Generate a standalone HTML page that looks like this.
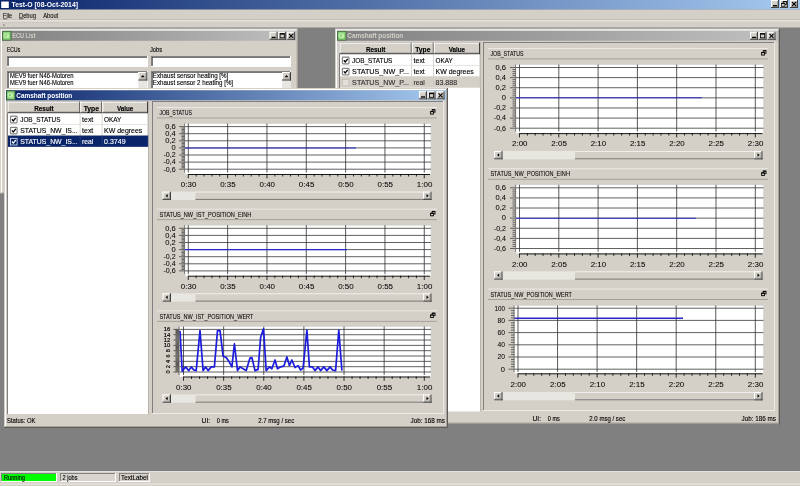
<!DOCTYPE html>
<html><head><meta charset="utf-8"><style>
html,body{margin:0;padding:0;background:#808080;width:800px;height:486px;overflow:hidden}
svg{display:block;will-change:transform}
text{font-family:"Liberation Sans",sans-serif}
</style></head><body>
<svg width="800" height="486" viewBox="0 0 800 486">
<linearGradient id="g1" x1="0" x2="1" y1="0" y2="0"><stop offset="0" stop-color="#0A246A"/><stop offset="1" stop-color="#A6CAF0"/></linearGradient>
<rect x="0.00" y="0.00" width="800.00" height="9.60" fill="url(#g1)" />
<rect x="1.20" y="1.50" width="7.60" height="6.50" fill="#FFFFFF" />
<text x="11.50" y="7.40" font-size="6.4" fill="#FFFFFF" font-weight="bold" text-anchor="start" textLength="66.50" lengthAdjust="spacingAndGlyphs"  >Test-O [08-Oct-2014]</text>
<rect x="771.00" y="0.00" width="8.00" height="8.00" fill="#D4D0C8" />
<rect x="771.00" y="0.00" width="8.00" height="1.00" fill="#FFFFFF" />
<rect x="771.00" y="0.00" width="1.00" height="8.00" fill="#FFFFFF" />
<rect x="771.00" y="7.00" width="8.00" height="1.00" fill="#404040" />
<rect x="778.00" y="0.00" width="1.00" height="8.00" fill="#404040" />
<rect x="772.00" y="6.00" width="6.00" height="1.00" fill="#808080" opacity="0.6"/>
<rect x="777.00" y="1.00" width="1.00" height="6.00" fill="#808080" opacity="0.6"/>
<rect x="773.00" y="5.00" width="4.00" height="1.30" fill="#000" />
<rect x="780.00" y="0.00" width="8.00" height="8.00" fill="#D4D0C8" />
<rect x="780.00" y="0.00" width="8.00" height="1.00" fill="#FFFFFF" />
<rect x="780.00" y="0.00" width="1.00" height="8.00" fill="#FFFFFF" />
<rect x="780.00" y="7.00" width="8.00" height="1.00" fill="#404040" />
<rect x="787.00" y="0.00" width="1.00" height="8.00" fill="#404040" />
<rect x="781.00" y="6.00" width="6.00" height="1.00" fill="#808080" opacity="0.6"/>
<rect x="786.00" y="1.00" width="1.00" height="6.00" fill="#808080" opacity="0.6"/>
<rect x="783.20" y="1.40" width="3.30" height="3.00" fill="none" stroke="#000" stroke-width="0.7"/>
<rect x="783.20" y="1.20" width="3.30" height="0.90" fill="#000" />
<rect x="781.60" y="3.20" width="3.30" height="3.00" fill="#D4D0C8" stroke="#000" stroke-width="0.7"/>
<rect x="781.60" y="3.00" width="3.30" height="0.90" fill="#000" />
<rect x="790.00" y="0.00" width="8.00" height="8.00" fill="#D4D0C8" />
<rect x="790.00" y="0.00" width="8.00" height="1.00" fill="#FFFFFF" />
<rect x="790.00" y="0.00" width="1.00" height="8.00" fill="#FFFFFF" />
<rect x="790.00" y="7.00" width="8.00" height="1.00" fill="#404040" />
<rect x="797.00" y="0.00" width="1.00" height="8.00" fill="#404040" />
<rect x="791.00" y="6.00" width="6.00" height="1.00" fill="#808080" opacity="0.6"/>
<rect x="796.00" y="1.00" width="1.00" height="6.00" fill="#808080" opacity="0.6"/>
<line x1="792.00" y1="2.00" x2="796.00" y2="6.00" stroke="#000" stroke-width="1.1" />
<line x1="796.00" y1="2.00" x2="792.00" y2="6.00" stroke="#000" stroke-width="1.1" />
<rect x="0.00" y="9.60" width="800.00" height="18.00" fill="#D4D0C8" />
<text x="3.00" y="18.30" font-size="6.6" fill="#000" font-weight="normal" text-anchor="start" textLength="9.00" lengthAdjust="spacingAndGlyphs" stroke="#000" stroke-width="0.06" >File</text>
<text x="19.00" y="18.30" font-size="6.6" fill="#000" font-weight="normal" text-anchor="start" textLength="17.00" lengthAdjust="spacingAndGlyphs" stroke="#000" stroke-width="0.06" >Debug</text>
<text x="43.20" y="18.30" font-size="6.6" fill="#000" font-weight="normal" text-anchor="start" textLength="15.00" lengthAdjust="spacingAndGlyphs" stroke="#000" stroke-width="0.06" >About</text>
<rect x="3.00" y="18.60" width="4.20" height="0.70" fill="#000" />
<rect x="19.00" y="18.60" width="4.60" height="0.70" fill="#000" />
<rect x="0.00" y="19.50" width="800.00" height="0.90" fill="#B8B4AC" />
<rect x="0.00" y="20.40" width="800.00" height="0.90" fill="#F4F2EE" />
<rect x="2.00" y="22.30" width="1.00" height="0.80" fill="#C0BCB4" />
<rect x="4.00" y="22.30" width="1.00" height="0.80" fill="#C0BCB4" />
<rect x="6.00" y="22.30" width="1.00" height="0.80" fill="#C0BCB4" />
<rect x="8.00" y="22.30" width="1.00" height="0.80" fill="#C0BCB4" />
<rect x="10.00" y="22.30" width="1.00" height="0.80" fill="#C0BCB4" />
<rect x="12.00" y="22.30" width="1.00" height="0.80" fill="#C0BCB4" />
<rect x="14.00" y="22.30" width="1.00" height="0.80" fill="#C0BCB4" />
<rect x="16.00" y="22.30" width="1.00" height="0.80" fill="#C0BCB4" />
<rect x="18.00" y="22.30" width="1.00" height="0.80" fill="#C0BCB4" />
<rect x="20.00" y="22.30" width="1.00" height="0.80" fill="#C0BCB4" />
<rect x="22.00" y="22.30" width="1.00" height="0.80" fill="#C0BCB4" />
<rect x="24.00" y="22.30" width="1.00" height="0.80" fill="#C0BCB4" />
<rect x="26.00" y="22.30" width="1.00" height="0.80" fill="#C0BCB4" />
<rect x="28.00" y="22.30" width="1.00" height="0.80" fill="#C0BCB4" />
<rect x="30.00" y="22.30" width="1.00" height="0.80" fill="#C0BCB4" />
<rect x="32.00" y="22.30" width="1.00" height="0.80" fill="#C0BCB4" />
<rect x="34.00" y="22.30" width="1.00" height="0.80" fill="#C0BCB4" />
<rect x="36.00" y="22.30" width="1.00" height="0.80" fill="#C0BCB4" />
<rect x="38.00" y="22.30" width="1.00" height="0.80" fill="#C0BCB4" />
<rect x="40.00" y="22.30" width="1.00" height="0.80" fill="#C0BCB4" />
<rect x="42.00" y="22.30" width="1.00" height="0.80" fill="#C0BCB4" />
<rect x="44.00" y="22.30" width="1.00" height="0.80" fill="#C0BCB4" />
<rect x="46.00" y="22.30" width="1.00" height="0.80" fill="#C0BCB4" />
<rect x="48.00" y="22.30" width="1.00" height="0.80" fill="#C0BCB4" />
<rect x="50.00" y="22.30" width="1.00" height="0.80" fill="#C0BCB4" />
<rect x="52.00" y="22.30" width="1.00" height="0.80" fill="#C0BCB4" />
<rect x="54.00" y="22.30" width="1.00" height="0.80" fill="#C0BCB4" />
<rect x="56.00" y="22.30" width="1.00" height="0.80" fill="#C0BCB4" />
<rect x="58.00" y="22.30" width="1.00" height="0.80" fill="#C0BCB4" />
<rect x="3.50" y="24.00" width="0.90" height="2.00" fill="#707070" />
<rect x="0.00" y="27.80" width="800.00" height="443.20" fill="#808080" />
<rect x="0.00" y="471.00" width="800.00" height="15.00" fill="#D4D0C8" />
<rect x="0.00" y="471.00" width="800.00" height="1.00" fill="#E4E2DC" />
<rect x="0.00" y="483.60" width="800.00" height="0.90" fill="#F0EEEA" />
<rect x="1.00" y="473.00" width="56.00" height="9.00" fill="#00FF00" />
<rect x="1.00" y="473.00" width="56.00" height="1.00" fill="#808080" />
<rect x="1.00" y="473.00" width="1.00" height="9.00" fill="#808080" />
<rect x="1.00" y="481.00" width="56.00" height="1.00" fill="#FFFFFF" />
<rect x="56.00" y="473.00" width="1.00" height="9.00" fill="#FFFFFF" />
<text x="4.00" y="479.80" font-size="6.4" fill="#000" font-weight="normal" text-anchor="start" textLength="21.00" lengthAdjust="spacingAndGlyphs" stroke="#000" stroke-width="0.12" >Running</text>
<rect x="60.00" y="473.00" width="56.00" height="9.00" fill="#D8D5CE" />
<rect x="60.00" y="473.00" width="56.00" height="1.00" fill="#808080" />
<rect x="60.00" y="473.00" width="1.00" height="9.00" fill="#808080" />
<rect x="60.00" y="481.00" width="56.00" height="1.00" fill="#FFFFFF" />
<rect x="115.00" y="473.00" width="1.00" height="9.00" fill="#FFFFFF" />
<text x="62.50" y="479.80" font-size="6.4" fill="#000" font-weight="normal" text-anchor="start" textLength="15.00" lengthAdjust="spacingAndGlyphs" stroke="#000" stroke-width="0.12" >2 jobs</text>
<rect x="119.00" y="473.00" width="31.00" height="9.00" fill="#D4D0C8" />
<rect x="119.00" y="473.00" width="31.00" height="1.00" fill="#808080" />
<rect x="119.00" y="473.00" width="1.00" height="9.00" fill="#808080" />
<rect x="119.00" y="481.00" width="31.00" height="1.00" fill="#FFFFFF" />
<rect x="149.00" y="473.00" width="1.00" height="9.00" fill="#FFFFFF" />
<text x="121.00" y="479.80" font-size="6.4" fill="#000" font-weight="normal" text-anchor="start" textLength="27.00" lengthAdjust="spacingAndGlyphs" stroke="#000" stroke-width="0.12" >TextLabel</text>
<rect x="0.00" y="28.50" width="298.60" height="166.00" fill="#D4D0C8" />
<rect x="1.00" y="29.50" width="296.60" height="1.00" fill="#FFFFFF" />
<rect x="1.00" y="29.50" width="1.00" height="164.00" fill="#FFFFFF" />
<rect x="0.00" y="193.50" width="298.60" height="1.00" fill="#5A5A5A" />
<rect x="297.60" y="28.50" width="1.00" height="166.00" fill="#5A5A5A" />
<rect x="1.00" y="192.50" width="296.60" height="1.00" fill="#A8A49C" />
<rect x="296.60" y="29.50" width="1.00" height="164.00" fill="#A8A49C" />
<linearGradient id="g2" x1="0" x2="1" y1="0" y2="0"><stop offset="0" stop-color="#808080"/><stop offset="1" stop-color="#C0C0C0"/></linearGradient>
<rect x="2.00" y="30.80" width="294.60" height="10.00" fill="url(#g2)" />
<rect x="2.30" y="31.00" width="9.00" height="9.50" fill="#3A6A36" />
<rect x="3.10" y="31.80" width="7.40" height="7.90" fill="#8CD27A" />
<circle cx="5.9" cy="35.6" r="1.9" fill="none" stroke="#C8F2B4" stroke-width="1.1"/>
<line x1="6.90" y1="36.60" x2="7.90" y2="38.00" stroke="#C8F2B4" stroke-width="1.0" />
<line x1="8.60" y1="33.60" x2="8.60" y2="38.00" stroke="#C8F2B4" stroke-width="0.9" />
<text x="12.30" y="38.40" font-size="6.6" fill="#D4D0C8" font-weight="bold" text-anchor="start" textLength="23.20" lengthAdjust="spacingAndGlyphs"  >ECU List</text>
<rect x="269.60" y="31.80" width="8.00" height="8.00" fill="#D4D0C8" />
<rect x="269.60" y="31.80" width="8.00" height="1.00" fill="#FFFFFF" />
<rect x="269.60" y="31.80" width="1.00" height="8.00" fill="#FFFFFF" />
<rect x="269.60" y="38.80" width="8.00" height="1.00" fill="#404040" />
<rect x="276.60" y="31.80" width="1.00" height="8.00" fill="#404040" />
<rect x="270.60" y="37.80" width="6.00" height="1.00" fill="#808080" opacity="0.6"/>
<rect x="275.60" y="32.80" width="1.00" height="6.00" fill="#808080" opacity="0.6"/>
<rect x="271.60" y="36.80" width="4.00" height="1.30" fill="#000" />
<rect x="278.10" y="31.80" width="8.00" height="8.00" fill="#D4D0C8" />
<rect x="278.10" y="31.80" width="8.00" height="1.00" fill="#FFFFFF" />
<rect x="278.10" y="31.80" width="1.00" height="8.00" fill="#FFFFFF" />
<rect x="278.10" y="38.80" width="8.00" height="1.00" fill="#404040" />
<rect x="285.10" y="31.80" width="1.00" height="8.00" fill="#404040" />
<rect x="279.10" y="37.80" width="6.00" height="1.00" fill="#808080" opacity="0.6"/>
<rect x="284.10" y="32.80" width="1.00" height="6.00" fill="#808080" opacity="0.6"/>
<rect x="280.10" y="33.60" width="4.20" height="4.20" fill="none" stroke="#000" stroke-width="0.8"/>
<rect x="280.10" y="33.40" width="4.20" height="1.20" fill="#000" />
<rect x="287.10" y="31.80" width="8.00" height="8.00" fill="#D4D0C8" />
<rect x="287.10" y="31.80" width="8.00" height="1.00" fill="#FFFFFF" />
<rect x="287.10" y="31.80" width="1.00" height="8.00" fill="#FFFFFF" />
<rect x="287.10" y="38.80" width="8.00" height="1.00" fill="#404040" />
<rect x="294.10" y="31.80" width="1.00" height="8.00" fill="#404040" />
<rect x="288.10" y="37.80" width="6.00" height="1.00" fill="#808080" opacity="0.6"/>
<rect x="293.10" y="32.80" width="1.00" height="6.00" fill="#808080" opacity="0.6"/>
<line x1="289.10" y1="33.80" x2="293.10" y2="37.80" stroke="#000" stroke-width="1.1" />
<line x1="293.10" y1="33.80" x2="289.10" y2="37.80" stroke="#000" stroke-width="1.1" />
<text x="7.00" y="52.40" font-size="6.5" fill="#000" font-weight="normal" text-anchor="start" textLength="13.20" lengthAdjust="spacingAndGlyphs" stroke="#000" stroke-width="0.12" >ECUs</text>
<text x="150.00" y="52.40" font-size="6.5" fill="#000" font-weight="normal" text-anchor="start" textLength="12.00" lengthAdjust="spacingAndGlyphs" stroke="#000" stroke-width="0.12" >Jobs</text>
<rect x="7.00" y="56.00" width="141.00" height="11.00" fill="#FFFFFF" />
<rect x="7.00" y="56.00" width="141.00" height="1.00" fill="#808080" />
<rect x="7.00" y="56.00" width="1.00" height="11.00" fill="#808080" />
<rect x="8.00" y="57.00" width="139.00" height="1.00" fill="#404040" opacity="0.7"/>
<rect x="8.00" y="57.00" width="1.00" height="9.00" fill="#404040" opacity="0.7"/>
<rect x="7.00" y="66.00" width="141.00" height="1.00" fill="#FFFFFF" />
<rect x="147.00" y="56.00" width="1.00" height="11.00" fill="#FFFFFF" />
<rect x="151.00" y="56.00" width="140.00" height="11.00" fill="#FFFFFF" />
<rect x="151.00" y="56.00" width="140.00" height="1.00" fill="#808080" />
<rect x="151.00" y="56.00" width="1.00" height="11.00" fill="#808080" />
<rect x="152.00" y="57.00" width="138.00" height="1.00" fill="#404040" opacity="0.7"/>
<rect x="152.00" y="57.00" width="1.00" height="9.00" fill="#404040" opacity="0.7"/>
<rect x="151.00" y="66.00" width="140.00" height="1.00" fill="#FFFFFF" />
<rect x="290.00" y="56.00" width="1.00" height="11.00" fill="#FFFFFF" />
<rect x="7.00" y="71.00" width="141.00" height="125.00" fill="#FFFFFF" />
<rect x="7.00" y="71.00" width="141.00" height="1.00" fill="#808080" />
<rect x="7.00" y="71.00" width="1.00" height="125.00" fill="#808080" />
<rect x="8.00" y="72.00" width="139.00" height="1.00" fill="#404040" opacity="0.7"/>
<rect x="8.00" y="72.00" width="1.00" height="123.00" fill="#404040" opacity="0.7"/>
<rect x="7.00" y="195.00" width="141.00" height="1.00" fill="#FFFFFF" />
<rect x="147.00" y="71.00" width="1.00" height="125.00" fill="#FFFFFF" />
<rect x="151.00" y="71.00" width="140.00" height="125.00" fill="#FFFFFF" />
<rect x="151.00" y="71.00" width="140.00" height="1.00" fill="#808080" />
<rect x="151.00" y="71.00" width="1.00" height="125.00" fill="#808080" />
<rect x="152.00" y="72.00" width="138.00" height="1.00" fill="#404040" opacity="0.7"/>
<rect x="152.00" y="72.00" width="1.00" height="123.00" fill="#404040" opacity="0.7"/>
<rect x="151.00" y="195.00" width="140.00" height="1.00" fill="#FFFFFF" />
<rect x="290.00" y="71.00" width="1.00" height="125.00" fill="#FFFFFF" />
<text x="10.00" y="78.30" font-size="6.4" fill="#000" font-weight="normal" text-anchor="start" textLength="63.50" lengthAdjust="spacingAndGlyphs" stroke="#000" stroke-width="0.12" >MEV9 fuer N46-Motoren</text>
<text x="10.00" y="85.40" font-size="6.4" fill="#000" font-weight="normal" text-anchor="start" textLength="63.50" lengthAdjust="spacingAndGlyphs" stroke="#000" stroke-width="0.12" >MEV9 fuer N46-Motoren</text>
<text x="152.80" y="78.30" font-size="6.4" fill="#000" font-weight="normal" text-anchor="start" textLength="75.50" lengthAdjust="spacingAndGlyphs" stroke="#000" stroke-width="0.12" >Exhaust sensor heating [%]</text>
<text x="152.80" y="85.40" font-size="6.4" fill="#000" font-weight="normal" text-anchor="start" textLength="80.30" lengthAdjust="spacingAndGlyphs" stroke="#000" stroke-width="0.12" >Exhaust sensor 2 heating [%]</text>
<rect x="138.30" y="72.00" width="9.00" height="120.00" fill="#E8E6E2" />
<rect x="138.30" y="72.00" width="9.00" height="8.50" fill="#D4D0C8" />
<rect x="138.30" y="72.00" width="9.00" height="1.00" fill="#FFFFFF" />
<rect x="138.30" y="72.00" width="1.00" height="8.50" fill="#FFFFFF" />
<rect x="138.30" y="79.50" width="9.00" height="1.00" fill="#404040" />
<rect x="146.30" y="72.00" width="1.00" height="8.50" fill="#404040" />
<rect x="139.30" y="78.50" width="7.00" height="1.00" fill="#808080" opacity="0.6"/>
<rect x="145.30" y="73.00" width="1.00" height="6.50" fill="#808080" opacity="0.6"/>
<polygon points="140.8,77.3 144.8,77.3 142.8,75.0" fill="#000"/>
<rect x="282.00" y="72.00" width="9.00" height="120.00" fill="#E8E6E2" />
<rect x="282.00" y="72.00" width="9.00" height="8.50" fill="#D4D0C8" />
<rect x="282.00" y="72.00" width="9.00" height="1.00" fill="#FFFFFF" />
<rect x="282.00" y="72.00" width="1.00" height="8.50" fill="#FFFFFF" />
<rect x="282.00" y="79.50" width="9.00" height="1.00" fill="#404040" />
<rect x="290.00" y="72.00" width="1.00" height="8.50" fill="#404040" />
<rect x="283.00" y="78.50" width="7.00" height="1.00" fill="#808080" opacity="0.6"/>
<rect x="289.00" y="73.00" width="1.00" height="6.50" fill="#808080" opacity="0.6"/>
<polygon points="284.5,77.3 288.5,77.3 286.5,75.0" fill="#000"/>
<rect x="335.00" y="28.50" width="445.00" height="396.00" fill="#D4D0C8" />
<rect x="336.00" y="29.50" width="443.00" height="1.00" fill="#FFFFFF" />
<rect x="336.00" y="29.50" width="1.00" height="394.00" fill="#FFFFFF" />
<rect x="335.00" y="423.50" width="445.00" height="1.00" fill="#5A5A5A" />
<rect x="779.00" y="28.50" width="1.00" height="396.00" fill="#5A5A5A" />
<rect x="336.00" y="422.50" width="443.00" height="1.00" fill="#A8A49C" />
<rect x="778.00" y="29.50" width="1.00" height="394.00" fill="#A8A49C" />
<linearGradient id="g3" x1="0" x2="1" y1="0" y2="0"><stop offset="0" stop-color="#808080"/><stop offset="1" stop-color="#C0C0C0"/></linearGradient>
<rect x="337.00" y="30.80" width="441.00" height="10.00" fill="url(#g3)" />
<rect x="337.30" y="31.00" width="9.00" height="9.50" fill="#3A6A36" />
<rect x="338.10" y="31.80" width="7.40" height="7.90" fill="#8CD27A" />
<circle cx="340.90000000000003" cy="35.6" r="1.9" fill="none" stroke="#C8F2B4" stroke-width="1.1"/>
<line x1="341.90" y1="36.60" x2="342.90" y2="38.00" stroke="#C8F2B4" stroke-width="1.0" />
<line x1="343.60" y1="33.60" x2="343.60" y2="38.00" stroke="#C8F2B4" stroke-width="0.9" />
<text x="347.30" y="38.40" font-size="6.6" fill="#D4D0C8" font-weight="bold" text-anchor="start" textLength="56.00" lengthAdjust="spacingAndGlyphs"  >Camshaft position</text>
<rect x="750.00" y="31.80" width="8.00" height="8.00" fill="#D4D0C8" />
<rect x="750.00" y="31.80" width="8.00" height="1.00" fill="#FFFFFF" />
<rect x="750.00" y="31.80" width="1.00" height="8.00" fill="#FFFFFF" />
<rect x="750.00" y="38.80" width="8.00" height="1.00" fill="#404040" />
<rect x="757.00" y="31.80" width="1.00" height="8.00" fill="#404040" />
<rect x="751.00" y="37.80" width="6.00" height="1.00" fill="#808080" opacity="0.6"/>
<rect x="756.00" y="32.80" width="1.00" height="6.00" fill="#808080" opacity="0.6"/>
<rect x="752.00" y="36.80" width="4.00" height="1.30" fill="#000" />
<rect x="758.50" y="31.80" width="8.00" height="8.00" fill="#D4D0C8" />
<rect x="758.50" y="31.80" width="8.00" height="1.00" fill="#FFFFFF" />
<rect x="758.50" y="31.80" width="1.00" height="8.00" fill="#FFFFFF" />
<rect x="758.50" y="38.80" width="8.00" height="1.00" fill="#404040" />
<rect x="765.50" y="31.80" width="1.00" height="8.00" fill="#404040" />
<rect x="759.50" y="37.80" width="6.00" height="1.00" fill="#808080" opacity="0.6"/>
<rect x="764.50" y="32.80" width="1.00" height="6.00" fill="#808080" opacity="0.6"/>
<rect x="760.50" y="33.60" width="4.20" height="4.20" fill="none" stroke="#000" stroke-width="0.8"/>
<rect x="760.50" y="33.40" width="4.20" height="1.20" fill="#000" />
<rect x="767.50" y="31.80" width="8.00" height="8.00" fill="#D4D0C8" />
<rect x="767.50" y="31.80" width="8.00" height="1.00" fill="#FFFFFF" />
<rect x="767.50" y="31.80" width="1.00" height="8.00" fill="#FFFFFF" />
<rect x="767.50" y="38.80" width="8.00" height="1.00" fill="#404040" />
<rect x="774.50" y="31.80" width="1.00" height="8.00" fill="#404040" />
<rect x="768.50" y="37.80" width="6.00" height="1.00" fill="#808080" opacity="0.6"/>
<rect x="773.50" y="32.80" width="1.00" height="6.00" fill="#808080" opacity="0.6"/>
<line x1="769.50" y1="33.80" x2="773.50" y2="37.80" stroke="#000" stroke-width="1.1" />
<line x1="773.50" y1="33.80" x2="769.50" y2="37.80" stroke="#000" stroke-width="1.1" />
<rect x="339.00" y="42.00" width="142.00" height="369.50" fill="#FFFFFF" />
<rect x="339.00" y="42.00" width="142.00" height="1.00" fill="#808080" />
<rect x="339.00" y="42.00" width="1.00" height="369.50" fill="#808080" />
<rect x="480.00" y="42.00" width="1.00" height="369.50" fill="#B8B4AC" />
<rect x="339.50" y="42.60" width="72.30" height="11.60" fill="#D4D0C8" />
<rect x="339.50" y="42.60" width="72.30" height="1.00" fill="#FFFFFF" />
<rect x="339.50" y="42.60" width="1.00" height="11.60" fill="#FFFFFF" />
<rect x="339.50" y="53.20" width="72.30" height="1.00" fill="#404040" />
<rect x="410.80" y="42.60" width="1.00" height="11.60" fill="#404040" />
<rect x="340.50" y="52.20" width="70.30" height="1.00" fill="#808080" opacity="0.4"/>
<text x="375.65" y="51.90" font-size="6.6" fill="#000" font-weight="bold" text-anchor="middle" textLength="19.50" lengthAdjust="spacingAndGlyphs" stroke="#000" stroke-width="0.15" >Result</text>
<rect x="411.80" y="42.60" width="22.00" height="11.60" fill="#D4D0C8" />
<rect x="411.80" y="42.60" width="22.00" height="1.00" fill="#FFFFFF" />
<rect x="411.80" y="42.60" width="1.00" height="11.60" fill="#FFFFFF" />
<rect x="411.80" y="53.20" width="22.00" height="1.00" fill="#404040" />
<rect x="432.80" y="42.60" width="1.00" height="11.60" fill="#404040" />
<rect x="412.80" y="52.20" width="20.00" height="1.00" fill="#808080" opacity="0.4"/>
<text x="422.80" y="51.90" font-size="6.6" fill="#000" font-weight="bold" text-anchor="middle" textLength="15.20" lengthAdjust="spacingAndGlyphs" stroke="#000" stroke-width="0.15" >Type</text>
<rect x="433.80" y="42.60" width="46.20" height="11.60" fill="#D4D0C8" />
<rect x="433.80" y="42.60" width="46.20" height="1.00" fill="#FFFFFF" />
<rect x="433.80" y="42.60" width="1.00" height="11.60" fill="#FFFFFF" />
<rect x="433.80" y="53.20" width="46.20" height="1.00" fill="#404040" />
<rect x="479.00" y="42.60" width="1.00" height="11.60" fill="#404040" />
<rect x="434.80" y="52.20" width="44.20" height="1.00" fill="#808080" opacity="0.4"/>
<text x="456.90" y="51.90" font-size="6.6" fill="#000" font-weight="bold" text-anchor="middle" textLength="16.50" lengthAdjust="spacingAndGlyphs" stroke="#000" stroke-width="0.15" >Value</text>
<rect x="411.20" y="54.40" width="0.80" height="11.10" fill="#D0CCC4" />
<rect x="433.20" y="54.40" width="0.80" height="11.10" fill="#D0CCC4" />
<rect x="479.40" y="54.40" width="0.80" height="11.10" fill="#D0CCC4" />
<rect x="340.00" y="64.90" width="140.00" height="0.80" fill="#E0DDD6" />
<rect x="342.40" y="57.20" width="6.60" height="6.60" fill="#FFFFFF" stroke="#848484" stroke-width="1.2" rx="0.8"/>
<polyline points="343.79999999999995,60.300000000000004 345.2,61.900000000000006 347.7,58.800000000000004" fill="none" stroke="#000" stroke-width="1.3"/>
<text x="352.10" y="63.00" font-size="6.7" fill="#000" font-weight="normal" text-anchor="start" textLength="40.30" lengthAdjust="spacingAndGlyphs" stroke="#000" stroke-width="0.12" >JOB_STATUS</text>
<text x="413.60" y="63.00" font-size="6.7" fill="#000" font-weight="normal" text-anchor="start" textLength="11.20" lengthAdjust="spacingAndGlyphs" stroke="#000" stroke-width="0.12" >text</text>
<text x="435.60" y="63.00" font-size="6.7" fill="#000" font-weight="normal" text-anchor="start" textLength="17.20" lengthAdjust="spacingAndGlyphs" stroke="#000" stroke-width="0.12" >OKAY</text>
<rect x="411.20" y="65.50" width="0.80" height="11.10" fill="#D0CCC4" />
<rect x="433.20" y="65.50" width="0.80" height="11.10" fill="#D0CCC4" />
<rect x="479.40" y="65.50" width="0.80" height="11.10" fill="#D0CCC4" />
<rect x="340.00" y="76.00" width="140.00" height="0.80" fill="#E0DDD6" />
<rect x="342.40" y="68.30" width="6.60" height="6.60" fill="#FFFFFF" stroke="#848484" stroke-width="1.2" rx="0.8"/>
<polyline points="343.79999999999995,71.39999999999999 345.2,73.0 347.7,69.89999999999999" fill="none" stroke="#000" stroke-width="1.3"/>
<text x="352.10" y="74.10" font-size="6.7" fill="#000" font-weight="normal" text-anchor="start" textLength="57.00" lengthAdjust="spacingAndGlyphs" stroke="#000" stroke-width="0.12" >STATUS_NW_P...</text>
<text x="413.60" y="74.10" font-size="6.7" fill="#000" font-weight="normal" text-anchor="start" textLength="11.20" lengthAdjust="spacingAndGlyphs" stroke="#000" stroke-width="0.12" >text</text>
<text x="435.60" y="74.10" font-size="6.7" fill="#000" font-weight="normal" text-anchor="start" textLength="38.20" lengthAdjust="spacingAndGlyphs" stroke="#000" stroke-width="0.12" >KW degrees</text>
<rect x="340.00" y="76.60" width="140.00" height="11.10" fill="#D4D0C8" />
<rect x="411.20" y="76.60" width="0.80" height="11.10" fill="#D0CCC4" />
<rect x="433.20" y="76.60" width="0.80" height="11.10" fill="#D0CCC4" />
<rect x="479.40" y="76.60" width="0.80" height="11.10" fill="#D0CCC4" />
<rect x="340.00" y="87.10" width="140.00" height="0.80" fill="#E0DDD6" />
<rect x="342.40" y="79.40" width="6.60" height="6.60" fill="#E2E0DA" stroke="#C4C0B8" stroke-width="1"/>
<text x="352.10" y="85.20" font-size="6.7" fill="#303030" font-weight="normal" text-anchor="start" textLength="57.00" lengthAdjust="spacingAndGlyphs" stroke="#303030" stroke-width="0.12" >STATUS_NW_P...</text>
<text x="413.60" y="85.20" font-size="6.7" fill="#303030" font-weight="normal" text-anchor="start" textLength="11.20" lengthAdjust="spacingAndGlyphs" stroke="#303030" stroke-width="0.12" >real</text>
<text x="435.60" y="85.20" font-size="6.7" fill="#303030" font-weight="normal" text-anchor="start" textLength="21.50" lengthAdjust="spacingAndGlyphs" stroke="#303030" stroke-width="0.12" >83.888</text>
<rect x="483.00" y="42.00" width="292.00" height="369.00" fill="#D4D0C8" />
<rect x="483.00" y="42.00" width="292.00" height="1.00" fill="#808080" />
<rect x="483.00" y="42.00" width="1.00" height="369.00" fill="#808080" />
<rect x="774.00" y="42.00" width="1.00" height="369.00" fill="#ECEAE4" />
<rect x="483.00" y="410.00" width="292.00" height="1.00" fill="#ECEAE4" />
<text x="532.50" y="420.80" font-size="6.3" fill="#000" font-weight="normal" text-anchor="start" textLength="8.50" lengthAdjust="spacingAndGlyphs" stroke="#000" stroke-width="0.12" >UI:</text>
<text x="547.80" y="420.80" font-size="6.3" fill="#000" font-weight="normal" text-anchor="start" textLength="12.00" lengthAdjust="spacingAndGlyphs" stroke="#000" stroke-width="0.12" >0 ms</text>
<text x="589.30" y="420.80" font-size="6.3" fill="#000" font-weight="normal" text-anchor="start" textLength="36.00" lengthAdjust="spacingAndGlyphs" stroke="#000" stroke-width="0.12" >2.0 msg / sec</text>
<text x="776.00" y="420.80" font-size="6.3" fill="#000" font-weight="normal" text-anchor="end" textLength="34.50" lengthAdjust="spacingAndGlyphs" stroke="#000" stroke-width="0.12" >Job:  186 ms</text>
<rect x="488.00" y="48.00" width="280.00" height="0.90" fill="#EEECE8" />
<rect x="488.00" y="58.50" width="280.00" height="0.90" fill="#A09C94" />
<text x="490.40" y="56.10" font-size="6.4" fill="#000" font-weight="normal" text-anchor="start" textLength="33.20" lengthAdjust="spacingAndGlyphs" stroke="#000" stroke-width="0.05" >JOB_STATUS</text>
<rect x="763.20" y="50.70" width="2.80" height="2.50" fill="none" stroke="#000" stroke-width="0.9"/>
<rect x="763.20" y="50.40" width="2.80" height="0.90" fill="#000" />
<rect x="761.60" y="52.50" width="2.80" height="2.60" fill="#D4D0C8" stroke="#000" stroke-width="0.9"/>
<rect x="761.60" y="52.20" width="2.80" height="0.90" fill="#000" />
<rect x="516.00" y="64.50" width="247.50" height="69.10" fill="#FFFFFF" stroke="#D0D0D0" stroke-width="0.6"/>
<line x1="516.00" y1="67.50" x2="763.50" y2="67.50" stroke="#383838" stroke-width="0.8" />
<line x1="516.00" y1="77.62" x2="763.50" y2="77.62" stroke="#383838" stroke-width="0.8" />
<line x1="516.00" y1="87.73" x2="763.50" y2="87.73" stroke="#383838" stroke-width="0.8" />
<line x1="516.00" y1="97.85" x2="763.50" y2="97.85" stroke="#383838" stroke-width="0.8" />
<line x1="516.00" y1="107.97" x2="763.50" y2="107.97" stroke="#383838" stroke-width="0.8" />
<line x1="516.00" y1="118.08" x2="763.50" y2="118.08" stroke="#383838" stroke-width="0.8" />
<line x1="516.00" y1="128.20" x2="763.50" y2="128.20" stroke="#383838" stroke-width="0.8" />
<line x1="519.50" y1="64.50" x2="519.50" y2="131.50" stroke="#303030" stroke-width="0.8" />
<line x1="558.80" y1="64.50" x2="558.80" y2="131.50" stroke="#303030" stroke-width="0.8" />
<line x1="598.10" y1="64.50" x2="598.10" y2="131.50" stroke="#303030" stroke-width="0.8" />
<line x1="637.40" y1="64.50" x2="637.40" y2="131.50" stroke="#303030" stroke-width="0.8" />
<line x1="676.70" y1="64.50" x2="676.70" y2="131.50" stroke="#303030" stroke-width="0.8" />
<line x1="716.00" y1="64.50" x2="716.00" y2="131.50" stroke="#303030" stroke-width="0.8" />
<line x1="755.30" y1="64.50" x2="755.30" y2="131.50" stroke="#303030" stroke-width="0.8" />
<text x="506.00" y="69.80" font-size="6.5" fill="#000" font-weight="normal" text-anchor="end" textLength="10.50" lengthAdjust="spacingAndGlyphs" stroke="#000" stroke-width="0.04" >0,6</text>
<text x="506.00" y="79.92" font-size="6.5" fill="#000" font-weight="normal" text-anchor="end" textLength="10.50" lengthAdjust="spacingAndGlyphs" stroke="#000" stroke-width="0.04" >0,4</text>
<text x="506.00" y="90.03" font-size="6.5" fill="#000" font-weight="normal" text-anchor="end" textLength="10.50" lengthAdjust="spacingAndGlyphs" stroke="#000" stroke-width="0.04" >0,2</text>
<text x="506.00" y="100.15" font-size="6.5" fill="#000" font-weight="normal" text-anchor="end" textLength="4.20" lengthAdjust="spacingAndGlyphs" stroke="#000" stroke-width="0.04" >0</text>
<text x="506.00" y="110.27" font-size="6.5" fill="#000" font-weight="normal" text-anchor="end" textLength="12.20" lengthAdjust="spacingAndGlyphs" stroke="#000" stroke-width="0.04" >-0,2</text>
<text x="506.00" y="120.38" font-size="6.5" fill="#000" font-weight="normal" text-anchor="end" textLength="12.20" lengthAdjust="spacingAndGlyphs" stroke="#000" stroke-width="0.04" >-0,4</text>
<text x="506.00" y="130.50" font-size="6.5" fill="#000" font-weight="normal" text-anchor="end" textLength="12.20" lengthAdjust="spacingAndGlyphs" stroke="#000" stroke-width="0.04" >-0,6</text>
<line x1="510.00" y1="67.50" x2="516.00" y2="67.50" stroke="#303030" stroke-width="0.7" />
<line x1="512.50" y1="69.52" x2="516.00" y2="69.52" stroke="#303030" stroke-width="0.7" />
<line x1="512.50" y1="71.55" x2="516.00" y2="71.55" stroke="#303030" stroke-width="0.7" />
<line x1="512.50" y1="73.57" x2="516.00" y2="73.57" stroke="#303030" stroke-width="0.7" />
<line x1="512.50" y1="75.59" x2="516.00" y2="75.59" stroke="#303030" stroke-width="0.7" />
<line x1="510.00" y1="77.62" x2="516.00" y2="77.62" stroke="#303030" stroke-width="0.7" />
<line x1="512.50" y1="79.64" x2="516.00" y2="79.64" stroke="#303030" stroke-width="0.7" />
<line x1="512.50" y1="81.66" x2="516.00" y2="81.66" stroke="#303030" stroke-width="0.7" />
<line x1="512.50" y1="83.69" x2="516.00" y2="83.69" stroke="#303030" stroke-width="0.7" />
<line x1="512.50" y1="85.71" x2="516.00" y2="85.71" stroke="#303030" stroke-width="0.7" />
<line x1="510.00" y1="87.73" x2="516.00" y2="87.73" stroke="#303030" stroke-width="0.7" />
<line x1="512.50" y1="89.76" x2="516.00" y2="89.76" stroke="#303030" stroke-width="0.7" />
<line x1="512.50" y1="91.78" x2="516.00" y2="91.78" stroke="#303030" stroke-width="0.7" />
<line x1="512.50" y1="93.80" x2="516.00" y2="93.80" stroke="#303030" stroke-width="0.7" />
<line x1="512.50" y1="95.83" x2="516.00" y2="95.83" stroke="#303030" stroke-width="0.7" />
<line x1="510.00" y1="97.85" x2="516.00" y2="97.85" stroke="#303030" stroke-width="0.7" />
<line x1="512.50" y1="99.87" x2="516.00" y2="99.87" stroke="#303030" stroke-width="0.7" />
<line x1="512.50" y1="101.90" x2="516.00" y2="101.90" stroke="#303030" stroke-width="0.7" />
<line x1="512.50" y1="103.92" x2="516.00" y2="103.92" stroke="#303030" stroke-width="0.7" />
<line x1="512.50" y1="105.94" x2="516.00" y2="105.94" stroke="#303030" stroke-width="0.7" />
<line x1="510.00" y1="107.97" x2="516.00" y2="107.97" stroke="#303030" stroke-width="0.7" />
<line x1="512.50" y1="109.99" x2="516.00" y2="109.99" stroke="#303030" stroke-width="0.7" />
<line x1="512.50" y1="112.01" x2="516.00" y2="112.01" stroke="#303030" stroke-width="0.7" />
<line x1="512.50" y1="114.04" x2="516.00" y2="114.04" stroke="#303030" stroke-width="0.7" />
<line x1="512.50" y1="116.06" x2="516.00" y2="116.06" stroke="#303030" stroke-width="0.7" />
<line x1="510.00" y1="118.08" x2="516.00" y2="118.08" stroke="#303030" stroke-width="0.7" />
<line x1="512.50" y1="120.11" x2="516.00" y2="120.11" stroke="#303030" stroke-width="0.7" />
<line x1="512.50" y1="122.13" x2="516.00" y2="122.13" stroke="#303030" stroke-width="0.7" />
<line x1="512.50" y1="124.15" x2="516.00" y2="124.15" stroke="#303030" stroke-width="0.7" />
<line x1="512.50" y1="126.18" x2="516.00" y2="126.18" stroke="#303030" stroke-width="0.7" />
<line x1="510.00" y1="128.20" x2="516.00" y2="128.20" stroke="#303030" stroke-width="0.7" />
<line x1="515.50" y1="64.50" x2="515.50" y2="131.50" stroke="#707070" stroke-width="0.8" />
<line x1="519.50" y1="133.60" x2="762.50" y2="133.60" stroke="#000" stroke-width="0.9" />
<line x1="519.50" y1="133.10" x2="519.50" y2="137.40" stroke="#000" stroke-width="0.8" />
<line x1="527.36" y1="133.10" x2="527.36" y2="135.60" stroke="#000" stroke-width="0.8" />
<line x1="535.22" y1="133.10" x2="535.22" y2="135.60" stroke="#000" stroke-width="0.8" />
<line x1="543.08" y1="133.10" x2="543.08" y2="135.60" stroke="#000" stroke-width="0.8" />
<line x1="550.94" y1="133.10" x2="550.94" y2="135.60" stroke="#000" stroke-width="0.8" />
<line x1="558.80" y1="133.10" x2="558.80" y2="137.40" stroke="#000" stroke-width="0.8" />
<line x1="566.66" y1="133.10" x2="566.66" y2="135.60" stroke="#000" stroke-width="0.8" />
<line x1="574.52" y1="133.10" x2="574.52" y2="135.60" stroke="#000" stroke-width="0.8" />
<line x1="582.38" y1="133.10" x2="582.38" y2="135.60" stroke="#000" stroke-width="0.8" />
<line x1="590.24" y1="133.10" x2="590.24" y2="135.60" stroke="#000" stroke-width="0.8" />
<line x1="598.10" y1="133.10" x2="598.10" y2="137.40" stroke="#000" stroke-width="0.8" />
<line x1="605.96" y1="133.10" x2="605.96" y2="135.60" stroke="#000" stroke-width="0.8" />
<line x1="613.82" y1="133.10" x2="613.82" y2="135.60" stroke="#000" stroke-width="0.8" />
<line x1="621.68" y1="133.10" x2="621.68" y2="135.60" stroke="#000" stroke-width="0.8" />
<line x1="629.54" y1="133.10" x2="629.54" y2="135.60" stroke="#000" stroke-width="0.8" />
<line x1="637.40" y1="133.10" x2="637.40" y2="137.40" stroke="#000" stroke-width="0.8" />
<line x1="645.26" y1="133.10" x2="645.26" y2="135.60" stroke="#000" stroke-width="0.8" />
<line x1="653.12" y1="133.10" x2="653.12" y2="135.60" stroke="#000" stroke-width="0.8" />
<line x1="660.98" y1="133.10" x2="660.98" y2="135.60" stroke="#000" stroke-width="0.8" />
<line x1="668.84" y1="133.10" x2="668.84" y2="135.60" stroke="#000" stroke-width="0.8" />
<line x1="676.70" y1="133.10" x2="676.70" y2="137.40" stroke="#000" stroke-width="0.8" />
<line x1="684.56" y1="133.10" x2="684.56" y2="135.60" stroke="#000" stroke-width="0.8" />
<line x1="692.42" y1="133.10" x2="692.42" y2="135.60" stroke="#000" stroke-width="0.8" />
<line x1="700.28" y1="133.10" x2="700.28" y2="135.60" stroke="#000" stroke-width="0.8" />
<line x1="708.14" y1="133.10" x2="708.14" y2="135.60" stroke="#000" stroke-width="0.8" />
<line x1="716.00" y1="133.10" x2="716.00" y2="137.40" stroke="#000" stroke-width="0.8" />
<line x1="723.86" y1="133.10" x2="723.86" y2="135.60" stroke="#000" stroke-width="0.8" />
<line x1="731.72" y1="133.10" x2="731.72" y2="135.60" stroke="#000" stroke-width="0.8" />
<line x1="739.58" y1="133.10" x2="739.58" y2="135.60" stroke="#000" stroke-width="0.8" />
<line x1="747.44" y1="133.10" x2="747.44" y2="135.60" stroke="#000" stroke-width="0.8" />
<line x1="755.30" y1="133.10" x2="755.30" y2="137.40" stroke="#000" stroke-width="0.8" />
<text x="519.80" y="146.30" font-size="6.4" fill="#000" font-weight="normal" text-anchor="middle" textLength="15.50" lengthAdjust="spacingAndGlyphs" stroke="#000" stroke-width="0.04" >2:00</text>
<text x="559.10" y="146.30" font-size="6.4" fill="#000" font-weight="normal" text-anchor="middle" textLength="15.50" lengthAdjust="spacingAndGlyphs" stroke="#000" stroke-width="0.04" >2:05</text>
<text x="598.40" y="146.30" font-size="6.4" fill="#000" font-weight="normal" text-anchor="middle" textLength="15.50" lengthAdjust="spacingAndGlyphs" stroke="#000" stroke-width="0.04" >2:10</text>
<text x="637.70" y="146.30" font-size="6.4" fill="#000" font-weight="normal" text-anchor="middle" textLength="15.50" lengthAdjust="spacingAndGlyphs" stroke="#000" stroke-width="0.04" >2:15</text>
<text x="677.00" y="146.30" font-size="6.4" fill="#000" font-weight="normal" text-anchor="middle" textLength="15.50" lengthAdjust="spacingAndGlyphs" stroke="#000" stroke-width="0.04" >2:20</text>
<text x="716.30" y="146.30" font-size="6.4" fill="#000" font-weight="normal" text-anchor="middle" textLength="15.50" lengthAdjust="spacingAndGlyphs" stroke="#000" stroke-width="0.04" >2:25</text>
<text x="755.60" y="146.30" font-size="6.4" fill="#000" font-weight="normal" text-anchor="middle" textLength="15.50" lengthAdjust="spacingAndGlyphs" stroke="#000" stroke-width="0.04" >2:30</text>
<polyline points="516.0,97.8 702.0,97.8" fill="none" stroke="#2828C8" stroke-width="1.05" stroke-linejoin="round"/>
<rect x="494.00" y="151.00" width="268.50" height="8.30" fill="#E8E6E1" />
<rect x="575.00" y="151.00" width="187.50" height="8.30" fill="#D4D0C8" />
<rect x="575.00" y="158.30" width="187.50" height="1.00" fill="#606060" opacity="0.8"/>
<rect x="575.00" y="151.00" width="187.50" height="1.00" fill="#F0EEEA" />
<rect x="494.00" y="151.00" width="8.50" height="8.30" fill="#D4D0C8" />
<rect x="494.00" y="151.00" width="8.50" height="1.00" fill="#FFFFFF" />
<rect x="494.00" y="151.00" width="1.00" height="8.30" fill="#FFFFFF" />
<rect x="494.00" y="158.30" width="8.50" height="1.00" fill="#404040" />
<rect x="501.50" y="151.00" width="1.00" height="8.30" fill="#404040" />
<rect x="495.00" y="157.30" width="6.50" height="1.00" fill="#808080" opacity="0.6"/>
<rect x="500.50" y="152.00" width="1.00" height="6.30" fill="#808080" opacity="0.6"/>
<polygon points="499.2,153.3 499.2,156.8 497,155.05" fill="#000"/>
<rect x="754.00" y="151.00" width="8.50" height="8.30" fill="#D4D0C8" />
<rect x="754.00" y="151.00" width="8.50" height="1.00" fill="#FFFFFF" />
<rect x="754.00" y="151.00" width="1.00" height="8.30" fill="#FFFFFF" />
<rect x="754.00" y="158.30" width="8.50" height="1.00" fill="#404040" />
<rect x="761.50" y="151.00" width="1.00" height="8.30" fill="#404040" />
<rect x="755.00" y="157.30" width="6.50" height="1.00" fill="#808080" opacity="0.6"/>
<rect x="760.50" y="152.00" width="1.00" height="6.30" fill="#808080" opacity="0.6"/>
<polygon points="757.5,153.3 757.5,156.8 759.7,155.05" fill="#000"/>
<rect x="488.00" y="168.30" width="280.00" height="0.90" fill="#EEECE8" />
<rect x="488.00" y="178.80" width="280.00" height="0.90" fill="#A09C94" />
<text x="490.40" y="176.40" font-size="6.4" fill="#000" font-weight="normal" text-anchor="start" textLength="79.50" lengthAdjust="spacingAndGlyphs" stroke="#000" stroke-width="0.05" >STATUS_NW_POSITION_EINH</text>
<rect x="763.20" y="171.00" width="2.80" height="2.50" fill="none" stroke="#000" stroke-width="0.9"/>
<rect x="763.20" y="170.70" width="2.80" height="0.90" fill="#000" />
<rect x="761.60" y="172.80" width="2.80" height="2.60" fill="#D4D0C8" stroke="#000" stroke-width="0.9"/>
<rect x="761.60" y="172.50" width="2.80" height="0.90" fill="#000" />
<rect x="516.00" y="184.80" width="247.50" height="69.10" fill="#FFFFFF" stroke="#D0D0D0" stroke-width="0.6"/>
<line x1="516.00" y1="187.80" x2="763.50" y2="187.80" stroke="#383838" stroke-width="0.8" />
<line x1="516.00" y1="197.92" x2="763.50" y2="197.92" stroke="#383838" stroke-width="0.8" />
<line x1="516.00" y1="208.03" x2="763.50" y2="208.03" stroke="#383838" stroke-width="0.8" />
<line x1="516.00" y1="218.15" x2="763.50" y2="218.15" stroke="#383838" stroke-width="0.8" />
<line x1="516.00" y1="228.27" x2="763.50" y2="228.27" stroke="#383838" stroke-width="0.8" />
<line x1="516.00" y1="238.38" x2="763.50" y2="238.38" stroke="#383838" stroke-width="0.8" />
<line x1="516.00" y1="248.50" x2="763.50" y2="248.50" stroke="#383838" stroke-width="0.8" />
<line x1="519.50" y1="184.80" x2="519.50" y2="251.80" stroke="#303030" stroke-width="0.8" />
<line x1="558.80" y1="184.80" x2="558.80" y2="251.80" stroke="#303030" stroke-width="0.8" />
<line x1="598.10" y1="184.80" x2="598.10" y2="251.80" stroke="#303030" stroke-width="0.8" />
<line x1="637.40" y1="184.80" x2="637.40" y2="251.80" stroke="#303030" stroke-width="0.8" />
<line x1="676.70" y1="184.80" x2="676.70" y2="251.80" stroke="#303030" stroke-width="0.8" />
<line x1="716.00" y1="184.80" x2="716.00" y2="251.80" stroke="#303030" stroke-width="0.8" />
<line x1="755.30" y1="184.80" x2="755.30" y2="251.80" stroke="#303030" stroke-width="0.8" />
<text x="506.00" y="190.10" font-size="6.5" fill="#000" font-weight="normal" text-anchor="end" textLength="10.50" lengthAdjust="spacingAndGlyphs" stroke="#000" stroke-width="0.04" >0,6</text>
<text x="506.00" y="200.22" font-size="6.5" fill="#000" font-weight="normal" text-anchor="end" textLength="10.50" lengthAdjust="spacingAndGlyphs" stroke="#000" stroke-width="0.04" >0,4</text>
<text x="506.00" y="210.33" font-size="6.5" fill="#000" font-weight="normal" text-anchor="end" textLength="10.50" lengthAdjust="spacingAndGlyphs" stroke="#000" stroke-width="0.04" >0,2</text>
<text x="506.00" y="220.45" font-size="6.5" fill="#000" font-weight="normal" text-anchor="end" textLength="4.20" lengthAdjust="spacingAndGlyphs" stroke="#000" stroke-width="0.04" >0</text>
<text x="506.00" y="230.57" font-size="6.5" fill="#000" font-weight="normal" text-anchor="end" textLength="12.20" lengthAdjust="spacingAndGlyphs" stroke="#000" stroke-width="0.04" >-0,2</text>
<text x="506.00" y="240.68" font-size="6.5" fill="#000" font-weight="normal" text-anchor="end" textLength="12.20" lengthAdjust="spacingAndGlyphs" stroke="#000" stroke-width="0.04" >-0,4</text>
<text x="506.00" y="250.80" font-size="6.5" fill="#000" font-weight="normal" text-anchor="end" textLength="12.20" lengthAdjust="spacingAndGlyphs" stroke="#000" stroke-width="0.04" >-0,6</text>
<line x1="510.00" y1="187.80" x2="516.00" y2="187.80" stroke="#303030" stroke-width="0.7" />
<line x1="512.50" y1="189.82" x2="516.00" y2="189.82" stroke="#303030" stroke-width="0.7" />
<line x1="512.50" y1="191.85" x2="516.00" y2="191.85" stroke="#303030" stroke-width="0.7" />
<line x1="512.50" y1="193.87" x2="516.00" y2="193.87" stroke="#303030" stroke-width="0.7" />
<line x1="512.50" y1="195.89" x2="516.00" y2="195.89" stroke="#303030" stroke-width="0.7" />
<line x1="510.00" y1="197.92" x2="516.00" y2="197.92" stroke="#303030" stroke-width="0.7" />
<line x1="512.50" y1="199.94" x2="516.00" y2="199.94" stroke="#303030" stroke-width="0.7" />
<line x1="512.50" y1="201.96" x2="516.00" y2="201.96" stroke="#303030" stroke-width="0.7" />
<line x1="512.50" y1="203.99" x2="516.00" y2="203.99" stroke="#303030" stroke-width="0.7" />
<line x1="512.50" y1="206.01" x2="516.00" y2="206.01" stroke="#303030" stroke-width="0.7" />
<line x1="510.00" y1="208.03" x2="516.00" y2="208.03" stroke="#303030" stroke-width="0.7" />
<line x1="512.50" y1="210.06" x2="516.00" y2="210.06" stroke="#303030" stroke-width="0.7" />
<line x1="512.50" y1="212.08" x2="516.00" y2="212.08" stroke="#303030" stroke-width="0.7" />
<line x1="512.50" y1="214.10" x2="516.00" y2="214.10" stroke="#303030" stroke-width="0.7" />
<line x1="512.50" y1="216.13" x2="516.00" y2="216.13" stroke="#303030" stroke-width="0.7" />
<line x1="510.00" y1="218.15" x2="516.00" y2="218.15" stroke="#303030" stroke-width="0.7" />
<line x1="512.50" y1="220.17" x2="516.00" y2="220.17" stroke="#303030" stroke-width="0.7" />
<line x1="512.50" y1="222.20" x2="516.00" y2="222.20" stroke="#303030" stroke-width="0.7" />
<line x1="512.50" y1="224.22" x2="516.00" y2="224.22" stroke="#303030" stroke-width="0.7" />
<line x1="512.50" y1="226.24" x2="516.00" y2="226.24" stroke="#303030" stroke-width="0.7" />
<line x1="510.00" y1="228.27" x2="516.00" y2="228.27" stroke="#303030" stroke-width="0.7" />
<line x1="512.50" y1="230.29" x2="516.00" y2="230.29" stroke="#303030" stroke-width="0.7" />
<line x1="512.50" y1="232.31" x2="516.00" y2="232.31" stroke="#303030" stroke-width="0.7" />
<line x1="512.50" y1="234.34" x2="516.00" y2="234.34" stroke="#303030" stroke-width="0.7" />
<line x1="512.50" y1="236.36" x2="516.00" y2="236.36" stroke="#303030" stroke-width="0.7" />
<line x1="510.00" y1="238.38" x2="516.00" y2="238.38" stroke="#303030" stroke-width="0.7" />
<line x1="512.50" y1="240.41" x2="516.00" y2="240.41" stroke="#303030" stroke-width="0.7" />
<line x1="512.50" y1="242.43" x2="516.00" y2="242.43" stroke="#303030" stroke-width="0.7" />
<line x1="512.50" y1="244.45" x2="516.00" y2="244.45" stroke="#303030" stroke-width="0.7" />
<line x1="512.50" y1="246.48" x2="516.00" y2="246.48" stroke="#303030" stroke-width="0.7" />
<line x1="510.00" y1="248.50" x2="516.00" y2="248.50" stroke="#303030" stroke-width="0.7" />
<line x1="515.50" y1="184.80" x2="515.50" y2="251.80" stroke="#707070" stroke-width="0.8" />
<line x1="519.50" y1="253.90" x2="762.50" y2="253.90" stroke="#000" stroke-width="0.9" />
<line x1="519.50" y1="253.40" x2="519.50" y2="257.70" stroke="#000" stroke-width="0.8" />
<line x1="527.36" y1="253.40" x2="527.36" y2="255.90" stroke="#000" stroke-width="0.8" />
<line x1="535.22" y1="253.40" x2="535.22" y2="255.90" stroke="#000" stroke-width="0.8" />
<line x1="543.08" y1="253.40" x2="543.08" y2="255.90" stroke="#000" stroke-width="0.8" />
<line x1="550.94" y1="253.40" x2="550.94" y2="255.90" stroke="#000" stroke-width="0.8" />
<line x1="558.80" y1="253.40" x2="558.80" y2="257.70" stroke="#000" stroke-width="0.8" />
<line x1="566.66" y1="253.40" x2="566.66" y2="255.90" stroke="#000" stroke-width="0.8" />
<line x1="574.52" y1="253.40" x2="574.52" y2="255.90" stroke="#000" stroke-width="0.8" />
<line x1="582.38" y1="253.40" x2="582.38" y2="255.90" stroke="#000" stroke-width="0.8" />
<line x1="590.24" y1="253.40" x2="590.24" y2="255.90" stroke="#000" stroke-width="0.8" />
<line x1="598.10" y1="253.40" x2="598.10" y2="257.70" stroke="#000" stroke-width="0.8" />
<line x1="605.96" y1="253.40" x2="605.96" y2="255.90" stroke="#000" stroke-width="0.8" />
<line x1="613.82" y1="253.40" x2="613.82" y2="255.90" stroke="#000" stroke-width="0.8" />
<line x1="621.68" y1="253.40" x2="621.68" y2="255.90" stroke="#000" stroke-width="0.8" />
<line x1="629.54" y1="253.40" x2="629.54" y2="255.90" stroke="#000" stroke-width="0.8" />
<line x1="637.40" y1="253.40" x2="637.40" y2="257.70" stroke="#000" stroke-width="0.8" />
<line x1="645.26" y1="253.40" x2="645.26" y2="255.90" stroke="#000" stroke-width="0.8" />
<line x1="653.12" y1="253.40" x2="653.12" y2="255.90" stroke="#000" stroke-width="0.8" />
<line x1="660.98" y1="253.40" x2="660.98" y2="255.90" stroke="#000" stroke-width="0.8" />
<line x1="668.84" y1="253.40" x2="668.84" y2="255.90" stroke="#000" stroke-width="0.8" />
<line x1="676.70" y1="253.40" x2="676.70" y2="257.70" stroke="#000" stroke-width="0.8" />
<line x1="684.56" y1="253.40" x2="684.56" y2="255.90" stroke="#000" stroke-width="0.8" />
<line x1="692.42" y1="253.40" x2="692.42" y2="255.90" stroke="#000" stroke-width="0.8" />
<line x1="700.28" y1="253.40" x2="700.28" y2="255.90" stroke="#000" stroke-width="0.8" />
<line x1="708.14" y1="253.40" x2="708.14" y2="255.90" stroke="#000" stroke-width="0.8" />
<line x1="716.00" y1="253.40" x2="716.00" y2="257.70" stroke="#000" stroke-width="0.8" />
<line x1="723.86" y1="253.40" x2="723.86" y2="255.90" stroke="#000" stroke-width="0.8" />
<line x1="731.72" y1="253.40" x2="731.72" y2="255.90" stroke="#000" stroke-width="0.8" />
<line x1="739.58" y1="253.40" x2="739.58" y2="255.90" stroke="#000" stroke-width="0.8" />
<line x1="747.44" y1="253.40" x2="747.44" y2="255.90" stroke="#000" stroke-width="0.8" />
<line x1="755.30" y1="253.40" x2="755.30" y2="257.70" stroke="#000" stroke-width="0.8" />
<text x="519.80" y="267.32" font-size="6.4" fill="#000" font-weight="normal" text-anchor="middle" textLength="15.50" lengthAdjust="spacingAndGlyphs" stroke="#000" stroke-width="0.04" >2:00</text>
<text x="559.10" y="267.32" font-size="6.4" fill="#000" font-weight="normal" text-anchor="middle" textLength="15.50" lengthAdjust="spacingAndGlyphs" stroke="#000" stroke-width="0.04" >2:05</text>
<text x="598.40" y="267.32" font-size="6.4" fill="#000" font-weight="normal" text-anchor="middle" textLength="15.50" lengthAdjust="spacingAndGlyphs" stroke="#000" stroke-width="0.04" >2:10</text>
<text x="637.70" y="267.32" font-size="6.4" fill="#000" font-weight="normal" text-anchor="middle" textLength="15.50" lengthAdjust="spacingAndGlyphs" stroke="#000" stroke-width="0.04" >2:15</text>
<text x="677.00" y="267.32" font-size="6.4" fill="#000" font-weight="normal" text-anchor="middle" textLength="15.50" lengthAdjust="spacingAndGlyphs" stroke="#000" stroke-width="0.04" >2:20</text>
<text x="716.30" y="267.32" font-size="6.4" fill="#000" font-weight="normal" text-anchor="middle" textLength="15.50" lengthAdjust="spacingAndGlyphs" stroke="#000" stroke-width="0.04" >2:25</text>
<text x="755.60" y="267.32" font-size="6.4" fill="#000" font-weight="normal" text-anchor="middle" textLength="15.50" lengthAdjust="spacingAndGlyphs" stroke="#000" stroke-width="0.04" >2:30</text>
<polyline points="516.0,218.2 696.0,218.2" fill="none" stroke="#2828C8" stroke-width="1.05" stroke-linejoin="round"/>
<rect x="494.00" y="271.30" width="268.50" height="8.30" fill="#E8E6E1" />
<rect x="575.00" y="271.30" width="187.50" height="8.30" fill="#D4D0C8" />
<rect x="575.00" y="278.60" width="187.50" height="1.00" fill="#606060" opacity="0.8"/>
<rect x="575.00" y="271.30" width="187.50" height="1.00" fill="#F0EEEA" />
<rect x="494.00" y="271.30" width="8.50" height="8.30" fill="#D4D0C8" />
<rect x="494.00" y="271.30" width="8.50" height="1.00" fill="#FFFFFF" />
<rect x="494.00" y="271.30" width="1.00" height="8.30" fill="#FFFFFF" />
<rect x="494.00" y="278.60" width="8.50" height="1.00" fill="#404040" />
<rect x="501.50" y="271.30" width="1.00" height="8.30" fill="#404040" />
<rect x="495.00" y="277.60" width="6.50" height="1.00" fill="#808080" opacity="0.6"/>
<rect x="500.50" y="272.30" width="1.00" height="6.30" fill="#808080" opacity="0.6"/>
<polygon points="499.2,273.6 499.2,277.1 497,275.35" fill="#000"/>
<rect x="754.00" y="271.30" width="8.50" height="8.30" fill="#D4D0C8" />
<rect x="754.00" y="271.30" width="8.50" height="1.00" fill="#FFFFFF" />
<rect x="754.00" y="271.30" width="1.00" height="8.30" fill="#FFFFFF" />
<rect x="754.00" y="278.60" width="8.50" height="1.00" fill="#404040" />
<rect x="761.50" y="271.30" width="1.00" height="8.30" fill="#404040" />
<rect x="755.00" y="277.60" width="6.50" height="1.00" fill="#808080" opacity="0.6"/>
<rect x="760.50" y="272.30" width="1.00" height="6.30" fill="#808080" opacity="0.6"/>
<polygon points="757.5,273.6 757.5,277.1 759.7,275.35" fill="#000"/>
<rect x="488.00" y="288.60" width="280.00" height="0.90" fill="#EEECE8" />
<rect x="488.00" y="299.10" width="280.00" height="0.90" fill="#A09C94" />
<text x="490.40" y="296.70" font-size="6.4" fill="#000" font-weight="normal" text-anchor="start" textLength="81.50" lengthAdjust="spacingAndGlyphs" stroke="#000" stroke-width="0.05" >STATUS_NW_POSITION_WERT</text>
<rect x="763.20" y="291.30" width="2.80" height="2.50" fill="none" stroke="#000" stroke-width="0.9"/>
<rect x="763.20" y="291.00" width="2.80" height="0.90" fill="#000" />
<rect x="761.60" y="293.10" width="2.80" height="2.60" fill="#D4D0C8" stroke="#000" stroke-width="0.9"/>
<rect x="761.60" y="292.80" width="2.80" height="0.90" fill="#000" />
<rect x="514.50" y="305.50" width="249.00" height="68.30" fill="#FFFFFF" stroke="#D0D0D0" stroke-width="0.6"/>
<line x1="514.50" y1="308.20" x2="763.50" y2="308.20" stroke="#383838" stroke-width="0.8" />
<line x1="514.50" y1="320.40" x2="763.50" y2="320.40" stroke="#383838" stroke-width="0.8" />
<line x1="514.50" y1="332.60" x2="763.50" y2="332.60" stroke="#383838" stroke-width="0.8" />
<line x1="514.50" y1="344.80" x2="763.50" y2="344.80" stroke="#383838" stroke-width="0.8" />
<line x1="514.50" y1="357.00" x2="763.50" y2="357.00" stroke="#383838" stroke-width="0.8" />
<line x1="514.50" y1="369.20" x2="763.50" y2="369.20" stroke="#383838" stroke-width="0.8" />
<line x1="518.00" y1="305.50" x2="518.00" y2="372.00" stroke="#303030" stroke-width="0.8" />
<line x1="557.55" y1="305.50" x2="557.55" y2="372.00" stroke="#303030" stroke-width="0.8" />
<line x1="597.10" y1="305.50" x2="597.10" y2="372.00" stroke="#303030" stroke-width="0.8" />
<line x1="636.65" y1="305.50" x2="636.65" y2="372.00" stroke="#303030" stroke-width="0.8" />
<line x1="676.20" y1="305.50" x2="676.20" y2="372.00" stroke="#303030" stroke-width="0.8" />
<line x1="715.75" y1="305.50" x2="715.75" y2="372.00" stroke="#303030" stroke-width="0.8" />
<line x1="755.30" y1="305.50" x2="755.30" y2="372.00" stroke="#303030" stroke-width="0.8" />
<text x="505.00" y="310.50" font-size="6.5" fill="#000" font-weight="normal" text-anchor="end" textLength="10.50" lengthAdjust="spacingAndGlyphs" stroke="#000" stroke-width="0.04" >100</text>
<text x="505.00" y="322.70" font-size="6.5" fill="#000" font-weight="normal" text-anchor="end" textLength="7.50" lengthAdjust="spacingAndGlyphs" stroke="#000" stroke-width="0.04" >80</text>
<text x="505.00" y="334.90" font-size="6.5" fill="#000" font-weight="normal" text-anchor="end" textLength="7.50" lengthAdjust="spacingAndGlyphs" stroke="#000" stroke-width="0.04" >60</text>
<text x="505.00" y="347.10" font-size="6.5" fill="#000" font-weight="normal" text-anchor="end" textLength="7.50" lengthAdjust="spacingAndGlyphs" stroke="#000" stroke-width="0.04" >40</text>
<text x="505.00" y="359.30" font-size="6.5" fill="#000" font-weight="normal" text-anchor="end" textLength="7.50" lengthAdjust="spacingAndGlyphs" stroke="#000" stroke-width="0.04" >20</text>
<text x="505.00" y="371.50" font-size="6.5" fill="#000" font-weight="normal" text-anchor="end" textLength="4.20" lengthAdjust="spacingAndGlyphs" stroke="#000" stroke-width="0.04" >0</text>
<line x1="508.50" y1="308.20" x2="514.50" y2="308.20" stroke="#303030" stroke-width="0.7" />
<line x1="511.00" y1="310.64" x2="514.50" y2="310.64" stroke="#303030" stroke-width="0.7" />
<line x1="511.00" y1="313.08" x2="514.50" y2="313.08" stroke="#303030" stroke-width="0.7" />
<line x1="511.00" y1="315.52" x2="514.50" y2="315.52" stroke="#303030" stroke-width="0.7" />
<line x1="511.00" y1="317.96" x2="514.50" y2="317.96" stroke="#303030" stroke-width="0.7" />
<line x1="508.50" y1="320.40" x2="514.50" y2="320.40" stroke="#303030" stroke-width="0.7" />
<line x1="511.00" y1="322.84" x2="514.50" y2="322.84" stroke="#303030" stroke-width="0.7" />
<line x1="511.00" y1="325.28" x2="514.50" y2="325.28" stroke="#303030" stroke-width="0.7" />
<line x1="511.00" y1="327.72" x2="514.50" y2="327.72" stroke="#303030" stroke-width="0.7" />
<line x1="511.00" y1="330.16" x2="514.50" y2="330.16" stroke="#303030" stroke-width="0.7" />
<line x1="508.50" y1="332.60" x2="514.50" y2="332.60" stroke="#303030" stroke-width="0.7" />
<line x1="511.00" y1="335.04" x2="514.50" y2="335.04" stroke="#303030" stroke-width="0.7" />
<line x1="511.00" y1="337.48" x2="514.50" y2="337.48" stroke="#303030" stroke-width="0.7" />
<line x1="511.00" y1="339.92" x2="514.50" y2="339.92" stroke="#303030" stroke-width="0.7" />
<line x1="511.00" y1="342.36" x2="514.50" y2="342.36" stroke="#303030" stroke-width="0.7" />
<line x1="508.50" y1="344.80" x2="514.50" y2="344.80" stroke="#303030" stroke-width="0.7" />
<line x1="511.00" y1="347.24" x2="514.50" y2="347.24" stroke="#303030" stroke-width="0.7" />
<line x1="511.00" y1="349.68" x2="514.50" y2="349.68" stroke="#303030" stroke-width="0.7" />
<line x1="511.00" y1="352.12" x2="514.50" y2="352.12" stroke="#303030" stroke-width="0.7" />
<line x1="511.00" y1="354.56" x2="514.50" y2="354.56" stroke="#303030" stroke-width="0.7" />
<line x1="508.50" y1="357.00" x2="514.50" y2="357.00" stroke="#303030" stroke-width="0.7" />
<line x1="511.00" y1="359.44" x2="514.50" y2="359.44" stroke="#303030" stroke-width="0.7" />
<line x1="511.00" y1="361.88" x2="514.50" y2="361.88" stroke="#303030" stroke-width="0.7" />
<line x1="511.00" y1="364.32" x2="514.50" y2="364.32" stroke="#303030" stroke-width="0.7" />
<line x1="511.00" y1="366.76" x2="514.50" y2="366.76" stroke="#303030" stroke-width="0.7" />
<line x1="508.50" y1="369.20" x2="514.50" y2="369.20" stroke="#303030" stroke-width="0.7" />
<line x1="514.00" y1="305.50" x2="514.00" y2="372.00" stroke="#707070" stroke-width="0.8" />
<line x1="518.00" y1="373.80" x2="762.50" y2="373.80" stroke="#000" stroke-width="0.9" />
<line x1="518.00" y1="373.30" x2="518.00" y2="377.60" stroke="#000" stroke-width="0.8" />
<line x1="525.91" y1="373.30" x2="525.91" y2="375.80" stroke="#000" stroke-width="0.8" />
<line x1="533.82" y1="373.30" x2="533.82" y2="375.80" stroke="#000" stroke-width="0.8" />
<line x1="541.73" y1="373.30" x2="541.73" y2="375.80" stroke="#000" stroke-width="0.8" />
<line x1="549.64" y1="373.30" x2="549.64" y2="375.80" stroke="#000" stroke-width="0.8" />
<line x1="557.55" y1="373.30" x2="557.55" y2="377.60" stroke="#000" stroke-width="0.8" />
<line x1="565.46" y1="373.30" x2="565.46" y2="375.80" stroke="#000" stroke-width="0.8" />
<line x1="573.37" y1="373.30" x2="573.37" y2="375.80" stroke="#000" stroke-width="0.8" />
<line x1="581.28" y1="373.30" x2="581.28" y2="375.80" stroke="#000" stroke-width="0.8" />
<line x1="589.19" y1="373.30" x2="589.19" y2="375.80" stroke="#000" stroke-width="0.8" />
<line x1="597.10" y1="373.30" x2="597.10" y2="377.60" stroke="#000" stroke-width="0.8" />
<line x1="605.01" y1="373.30" x2="605.01" y2="375.80" stroke="#000" stroke-width="0.8" />
<line x1="612.92" y1="373.30" x2="612.92" y2="375.80" stroke="#000" stroke-width="0.8" />
<line x1="620.83" y1="373.30" x2="620.83" y2="375.80" stroke="#000" stroke-width="0.8" />
<line x1="628.74" y1="373.30" x2="628.74" y2="375.80" stroke="#000" stroke-width="0.8" />
<line x1="636.65" y1="373.30" x2="636.65" y2="377.60" stroke="#000" stroke-width="0.8" />
<line x1="644.56" y1="373.30" x2="644.56" y2="375.80" stroke="#000" stroke-width="0.8" />
<line x1="652.47" y1="373.30" x2="652.47" y2="375.80" stroke="#000" stroke-width="0.8" />
<line x1="660.38" y1="373.30" x2="660.38" y2="375.80" stroke="#000" stroke-width="0.8" />
<line x1="668.29" y1="373.30" x2="668.29" y2="375.80" stroke="#000" stroke-width="0.8" />
<line x1="676.20" y1="373.30" x2="676.20" y2="377.60" stroke="#000" stroke-width="0.8" />
<line x1="684.11" y1="373.30" x2="684.11" y2="375.80" stroke="#000" stroke-width="0.8" />
<line x1="692.02" y1="373.30" x2="692.02" y2="375.80" stroke="#000" stroke-width="0.8" />
<line x1="699.93" y1="373.30" x2="699.93" y2="375.80" stroke="#000" stroke-width="0.8" />
<line x1="707.84" y1="373.30" x2="707.84" y2="375.80" stroke="#000" stroke-width="0.8" />
<line x1="715.75" y1="373.30" x2="715.75" y2="377.60" stroke="#000" stroke-width="0.8" />
<line x1="723.66" y1="373.30" x2="723.66" y2="375.80" stroke="#000" stroke-width="0.8" />
<line x1="731.57" y1="373.30" x2="731.57" y2="375.80" stroke="#000" stroke-width="0.8" />
<line x1="739.48" y1="373.30" x2="739.48" y2="375.80" stroke="#000" stroke-width="0.8" />
<line x1="747.39" y1="373.30" x2="747.39" y2="375.80" stroke="#000" stroke-width="0.8" />
<line x1="755.30" y1="373.30" x2="755.30" y2="377.60" stroke="#000" stroke-width="0.8" />
<text x="518.30" y="387.00" font-size="6.4" fill="#000" font-weight="normal" text-anchor="middle" textLength="15.50" lengthAdjust="spacingAndGlyphs" stroke="#000" stroke-width="0.04" >2:00</text>
<text x="557.85" y="387.00" font-size="6.4" fill="#000" font-weight="normal" text-anchor="middle" textLength="15.50" lengthAdjust="spacingAndGlyphs" stroke="#000" stroke-width="0.04" >2:05</text>
<text x="597.40" y="387.00" font-size="6.4" fill="#000" font-weight="normal" text-anchor="middle" textLength="15.50" lengthAdjust="spacingAndGlyphs" stroke="#000" stroke-width="0.04" >2:10</text>
<text x="636.95" y="387.00" font-size="6.4" fill="#000" font-weight="normal" text-anchor="middle" textLength="15.50" lengthAdjust="spacingAndGlyphs" stroke="#000" stroke-width="0.04" >2:15</text>
<text x="676.50" y="387.00" font-size="6.4" fill="#000" font-weight="normal" text-anchor="middle" textLength="15.50" lengthAdjust="spacingAndGlyphs" stroke="#000" stroke-width="0.04" >2:20</text>
<text x="716.05" y="387.00" font-size="6.4" fill="#000" font-weight="normal" text-anchor="middle" textLength="15.50" lengthAdjust="spacingAndGlyphs" stroke="#000" stroke-width="0.04" >2:25</text>
<text x="755.60" y="387.00" font-size="6.4" fill="#000" font-weight="normal" text-anchor="middle" textLength="15.50" lengthAdjust="spacingAndGlyphs" stroke="#000" stroke-width="0.04" >2:30</text>
<rect x="494.00" y="392.00" width="268.50" height="8.30" fill="#E8E6E1" />
<rect x="575.00" y="392.00" width="187.50" height="8.30" fill="#D4D0C8" />
<rect x="575.00" y="399.30" width="187.50" height="1.00" fill="#606060" opacity="0.8"/>
<rect x="575.00" y="392.00" width="187.50" height="1.00" fill="#F0EEEA" />
<rect x="494.00" y="392.00" width="8.50" height="8.30" fill="#D4D0C8" />
<rect x="494.00" y="392.00" width="8.50" height="1.00" fill="#FFFFFF" />
<rect x="494.00" y="392.00" width="1.00" height="8.30" fill="#FFFFFF" />
<rect x="494.00" y="399.30" width="8.50" height="1.00" fill="#404040" />
<rect x="501.50" y="392.00" width="1.00" height="8.30" fill="#404040" />
<rect x="495.00" y="398.30" width="6.50" height="1.00" fill="#808080" opacity="0.6"/>
<rect x="500.50" y="393.00" width="1.00" height="6.30" fill="#808080" opacity="0.6"/>
<polygon points="499.2,394.3 499.2,397.8 497,396.05" fill="#000"/>
<rect x="754.00" y="392.00" width="8.50" height="8.30" fill="#D4D0C8" />
<rect x="754.00" y="392.00" width="8.50" height="1.00" fill="#FFFFFF" />
<rect x="754.00" y="392.00" width="1.00" height="8.30" fill="#FFFFFF" />
<rect x="754.00" y="399.30" width="8.50" height="1.00" fill="#404040" />
<rect x="761.50" y="392.00" width="1.00" height="8.30" fill="#404040" />
<rect x="755.00" y="398.30" width="6.50" height="1.00" fill="#808080" opacity="0.6"/>
<rect x="760.50" y="393.00" width="1.00" height="6.30" fill="#808080" opacity="0.6"/>
<polygon points="757.5,394.3 757.5,397.8 759.7,396.05" fill="#000"/>
<line x1="514.50" y1="318.20" x2="683.00" y2="318.20" stroke="#2828C8" stroke-width="1.6" />
<rect x="4.00" y="88.00" width="444.00" height="340.00" fill="#D4D0C8" />
<rect x="5.00" y="89.00" width="442.00" height="1.00" fill="#FFFFFF" />
<rect x="5.00" y="89.00" width="1.00" height="338.00" fill="#FFFFFF" />
<rect x="4.00" y="427.00" width="444.00" height="1.00" fill="#5A5A5A" />
<rect x="447.00" y="88.00" width="1.00" height="340.00" fill="#5A5A5A" />
<rect x="5.00" y="426.00" width="442.00" height="1.00" fill="#A8A49C" />
<rect x="446.00" y="89.00" width="1.00" height="338.00" fill="#A8A49C" />
<linearGradient id="g4" x1="0" x2="1" y1="0" y2="0"><stop offset="0" stop-color="#0A246A"/><stop offset="1" stop-color="#A6CAF0"/></linearGradient>
<rect x="6.00" y="90.30" width="440.00" height="10.00" fill="url(#g4)" />
<rect x="6.30" y="90.50" width="9.00" height="9.50" fill="#3A6A36" />
<rect x="7.10" y="91.30" width="7.40" height="7.90" fill="#8CD27A" />
<circle cx="9.9" cy="95.1" r="1.9" fill="none" stroke="#C8F2B4" stroke-width="1.1"/>
<line x1="10.90" y1="96.10" x2="11.90" y2="97.50" stroke="#C8F2B4" stroke-width="1.0" />
<line x1="12.60" y1="93.10" x2="12.60" y2="97.50" stroke="#C8F2B4" stroke-width="0.9" />
<text x="16.30" y="97.90" font-size="6.6" fill="#FFFFFF" font-weight="bold" text-anchor="start" textLength="56.00" lengthAdjust="spacingAndGlyphs"  >Camshaft position</text>
<rect x="419.00" y="91.30" width="8.00" height="8.00" fill="#D4D0C8" />
<rect x="419.00" y="91.30" width="8.00" height="1.00" fill="#FFFFFF" />
<rect x="419.00" y="91.30" width="1.00" height="8.00" fill="#FFFFFF" />
<rect x="419.00" y="98.30" width="8.00" height="1.00" fill="#404040" />
<rect x="426.00" y="91.30" width="1.00" height="8.00" fill="#404040" />
<rect x="420.00" y="97.30" width="6.00" height="1.00" fill="#808080" opacity="0.6"/>
<rect x="425.00" y="92.30" width="1.00" height="6.00" fill="#808080" opacity="0.6"/>
<rect x="421.00" y="96.30" width="4.00" height="1.30" fill="#000" />
<rect x="427.50" y="91.30" width="8.00" height="8.00" fill="#D4D0C8" />
<rect x="427.50" y="91.30" width="8.00" height="1.00" fill="#FFFFFF" />
<rect x="427.50" y="91.30" width="1.00" height="8.00" fill="#FFFFFF" />
<rect x="427.50" y="98.30" width="8.00" height="1.00" fill="#404040" />
<rect x="434.50" y="91.30" width="1.00" height="8.00" fill="#404040" />
<rect x="428.50" y="97.30" width="6.00" height="1.00" fill="#808080" opacity="0.6"/>
<rect x="433.50" y="92.30" width="1.00" height="6.00" fill="#808080" opacity="0.6"/>
<rect x="429.50" y="93.10" width="4.20" height="4.20" fill="none" stroke="#000" stroke-width="0.8"/>
<rect x="429.50" y="92.90" width="4.20" height="1.20" fill="#000" />
<rect x="436.50" y="91.30" width="8.00" height="8.00" fill="#D4D0C8" />
<rect x="436.50" y="91.30" width="8.00" height="1.00" fill="#FFFFFF" />
<rect x="436.50" y="91.30" width="1.00" height="8.00" fill="#FFFFFF" />
<rect x="436.50" y="98.30" width="8.00" height="1.00" fill="#404040" />
<rect x="443.50" y="91.30" width="1.00" height="8.00" fill="#404040" />
<rect x="437.50" y="97.30" width="6.00" height="1.00" fill="#808080" opacity="0.6"/>
<rect x="442.50" y="92.30" width="1.00" height="6.00" fill="#808080" opacity="0.6"/>
<line x1="438.50" y1="93.30" x2="442.50" y2="97.30" stroke="#000" stroke-width="1.1" />
<line x1="442.50" y1="93.30" x2="438.50" y2="97.30" stroke="#000" stroke-width="1.1" />
<rect x="7.00" y="101.00" width="142.00" height="313.00" fill="#FFFFFF" />
<rect x="7.00" y="101.00" width="142.00" height="1.00" fill="#808080" />
<rect x="7.00" y="101.00" width="1.00" height="313.00" fill="#808080" />
<rect x="148.00" y="101.00" width="1.00" height="313.00" fill="#B8B4AC" />
<rect x="7.60" y="101.60" width="72.70" height="11.60" fill="#D4D0C8" />
<rect x="7.60" y="101.60" width="72.70" height="1.00" fill="#FFFFFF" />
<rect x="7.60" y="101.60" width="1.00" height="11.60" fill="#FFFFFF" />
<rect x="7.60" y="112.20" width="72.70" height="1.00" fill="#404040" />
<rect x="79.30" y="101.60" width="1.00" height="11.60" fill="#404040" />
<rect x="8.60" y="111.20" width="70.70" height="1.00" fill="#808080" opacity="0.4"/>
<text x="43.95" y="110.90" font-size="6.6" fill="#000" font-weight="bold" text-anchor="middle" textLength="19.50" lengthAdjust="spacingAndGlyphs" stroke="#000" stroke-width="0.15" >Result</text>
<rect x="80.30" y="101.60" width="22.00" height="11.60" fill="#D4D0C8" />
<rect x="80.30" y="101.60" width="22.00" height="1.00" fill="#FFFFFF" />
<rect x="80.30" y="101.60" width="1.00" height="11.60" fill="#FFFFFF" />
<rect x="80.30" y="112.20" width="22.00" height="1.00" fill="#404040" />
<rect x="101.30" y="101.60" width="1.00" height="11.60" fill="#404040" />
<rect x="81.30" y="111.20" width="20.00" height="1.00" fill="#808080" opacity="0.4"/>
<text x="91.30" y="110.90" font-size="6.6" fill="#000" font-weight="bold" text-anchor="middle" textLength="15.20" lengthAdjust="spacingAndGlyphs" stroke="#000" stroke-width="0.15" >Type</text>
<rect x="102.30" y="101.60" width="45.70" height="11.60" fill="#D4D0C8" />
<rect x="102.30" y="101.60" width="45.70" height="1.00" fill="#FFFFFF" />
<rect x="102.30" y="101.60" width="1.00" height="11.60" fill="#FFFFFF" />
<rect x="102.30" y="112.20" width="45.70" height="1.00" fill="#404040" />
<rect x="147.00" y="101.60" width="1.00" height="11.60" fill="#404040" />
<rect x="103.30" y="111.20" width="43.70" height="1.00" fill="#808080" opacity="0.4"/>
<text x="125.15" y="110.90" font-size="6.6" fill="#000" font-weight="bold" text-anchor="middle" textLength="16.50" lengthAdjust="spacingAndGlyphs" stroke="#000" stroke-width="0.15" >Value</text>
<rect x="79.70" y="113.40" width="0.80" height="11.10" fill="#D0CCC4" />
<rect x="101.70" y="113.40" width="0.80" height="11.10" fill="#D0CCC4" />
<rect x="147.40" y="113.40" width="0.80" height="11.10" fill="#D0CCC4" />
<rect x="8.00" y="123.90" width="140.00" height="0.80" fill="#E0DDD6" />
<rect x="10.50" y="116.20" width="6.60" height="6.60" fill="#FFFFFF" stroke="#848484" stroke-width="1.2" rx="0.8"/>
<polyline points="11.9,119.3 13.3,120.9 15.8,117.8" fill="none" stroke="#000" stroke-width="1.3"/>
<text x="20.20" y="122.00" font-size="6.7" fill="#000" font-weight="normal" text-anchor="start" textLength="40.30" lengthAdjust="spacingAndGlyphs" stroke="#000" stroke-width="0.12" >JOB_STATUS</text>
<text x="82.10" y="122.00" font-size="6.7" fill="#000" font-weight="normal" text-anchor="start" textLength="11.20" lengthAdjust="spacingAndGlyphs" stroke="#000" stroke-width="0.12" >text</text>
<text x="104.10" y="122.00" font-size="6.7" fill="#000" font-weight="normal" text-anchor="start" textLength="17.20" lengthAdjust="spacingAndGlyphs" stroke="#000" stroke-width="0.12" >OKAY</text>
<rect x="79.70" y="124.50" width="0.80" height="11.10" fill="#D0CCC4" />
<rect x="101.70" y="124.50" width="0.80" height="11.10" fill="#D0CCC4" />
<rect x="147.40" y="124.50" width="0.80" height="11.10" fill="#D0CCC4" />
<rect x="8.00" y="135.00" width="140.00" height="0.80" fill="#E0DDD6" />
<rect x="10.50" y="127.30" width="6.60" height="6.60" fill="#FFFFFF" stroke="#848484" stroke-width="1.2" rx="0.8"/>
<polyline points="11.9,130.4 13.3,132.0 15.8,128.9" fill="none" stroke="#000" stroke-width="1.3"/>
<text x="20.20" y="133.10" font-size="6.7" fill="#000" font-weight="normal" text-anchor="start" textLength="57.50" lengthAdjust="spacingAndGlyphs" stroke="#000" stroke-width="0.12" >STATUS_NW_IS...</text>
<text x="82.10" y="133.10" font-size="6.7" fill="#000" font-weight="normal" text-anchor="start" textLength="11.20" lengthAdjust="spacingAndGlyphs" stroke="#000" stroke-width="0.12" >text</text>
<text x="104.10" y="133.10" font-size="6.7" fill="#000" font-weight="normal" text-anchor="start" textLength="38.20" lengthAdjust="spacingAndGlyphs" stroke="#000" stroke-width="0.12" >KW degrees</text>
<rect x="8.00" y="135.60" width="140.00" height="11.10" fill="#0A246A" />
<rect x="79.70" y="135.60" width="0.80" height="11.10" fill="#26407A" />
<rect x="101.70" y="135.60" width="0.80" height="11.10" fill="#26407A" />
<rect x="147.40" y="135.60" width="0.80" height="11.10" fill="#26407A" />
<rect x="8.00" y="146.10" width="140.00" height="0.80" fill="#26407A" />
<rect x="10.50" y="138.40" width="6.60" height="6.60" fill="#0A246A" stroke="#B8C4E0" stroke-width="1"/>
<polyline points="11.9,141.5 13.3,143.1 15.8,140.0" fill="none" stroke="#FFF" stroke-width="1.2"/>
<text x="20.20" y="144.20" font-size="6.7" fill="#FFFFFF" font-weight="normal" text-anchor="start" textLength="57.50" lengthAdjust="spacingAndGlyphs" stroke="#FFFFFF" stroke-width="0.12" >STATUS_NW_IS...</text>
<text x="82.10" y="144.20" font-size="6.7" fill="#FFFFFF" font-weight="normal" text-anchor="start" textLength="11.20" lengthAdjust="spacingAndGlyphs" stroke="#FFFFFF" stroke-width="0.12" >real</text>
<text x="104.10" y="144.20" font-size="6.7" fill="#FFFFFF" font-weight="normal" text-anchor="start" textLength="21.50" lengthAdjust="spacingAndGlyphs" stroke="#FFFFFF" stroke-width="0.12" >0.3749</text>
<rect x="152.00" y="101.00" width="292.00" height="313.00" fill="#D4D0C8" />
<rect x="152.00" y="101.00" width="292.00" height="1.00" fill="#808080" />
<rect x="152.00" y="101.00" width="1.00" height="313.00" fill="#808080" />
<rect x="443.00" y="101.00" width="1.00" height="313.00" fill="#ECEAE4" />
<rect x="152.00" y="413.00" width="292.00" height="1.00" fill="#ECEAE4" />
<text x="7.00" y="422.70" font-size="6.3" fill="#000" font-weight="normal" text-anchor="start" textLength="28.50" lengthAdjust="spacingAndGlyphs" stroke="#000" stroke-width="0.12" >Status: OK</text>
<text x="201.60" y="422.70" font-size="6.3" fill="#000" font-weight="normal" text-anchor="start" textLength="8.50" lengthAdjust="spacingAndGlyphs" stroke="#000" stroke-width="0.12" >UI:</text>
<text x="216.80" y="422.70" font-size="6.3" fill="#000" font-weight="normal" text-anchor="start" textLength="12.00" lengthAdjust="spacingAndGlyphs" stroke="#000" stroke-width="0.12" >0 ms</text>
<text x="258.20" y="422.70" font-size="6.3" fill="#000" font-weight="normal" text-anchor="start" textLength="36.00" lengthAdjust="spacingAndGlyphs" stroke="#000" stroke-width="0.12" >2.7 msg / sec</text>
<text x="445.00" y="422.70" font-size="6.3" fill="#000" font-weight="normal" text-anchor="end" textLength="34.50" lengthAdjust="spacingAndGlyphs" stroke="#000" stroke-width="0.12" >Job:  168 ms</text>
<rect x="157.00" y="107.00" width="280.00" height="0.90" fill="#EEECE8" />
<rect x="157.00" y="117.50" width="280.00" height="0.90" fill="#A09C94" />
<text x="159.40" y="115.10" font-size="6.4" fill="#000" font-weight="normal" text-anchor="start" textLength="32.50" lengthAdjust="spacingAndGlyphs" stroke="#000" stroke-width="0.05" >JOB_STATUS</text>
<rect x="432.20" y="109.70" width="2.80" height="2.50" fill="none" stroke="#000" stroke-width="0.9"/>
<rect x="432.20" y="109.40" width="2.80" height="0.90" fill="#000" />
<rect x="430.60" y="111.50" width="2.80" height="2.60" fill="#D4D0C8" stroke="#000" stroke-width="0.9"/>
<rect x="430.60" y="111.20" width="2.80" height="0.90" fill="#000" />
<rect x="185.00" y="123.50" width="246.00" height="51.00" fill="#FFFFFF" stroke="#D0D0D0" stroke-width="0.6"/>
<line x1="185.00" y1="126.60" x2="431.00" y2="126.60" stroke="#383838" stroke-width="0.8" />
<line x1="185.00" y1="133.70" x2="431.00" y2="133.70" stroke="#383838" stroke-width="0.8" />
<line x1="185.00" y1="140.80" x2="431.00" y2="140.80" stroke="#383838" stroke-width="0.8" />
<line x1="185.00" y1="147.90" x2="431.00" y2="147.90" stroke="#383838" stroke-width="0.8" />
<line x1="185.00" y1="155.00" x2="431.00" y2="155.00" stroke="#383838" stroke-width="0.8" />
<line x1="185.00" y1="162.10" x2="431.00" y2="162.10" stroke="#383838" stroke-width="0.8" />
<line x1="185.00" y1="169.20" x2="431.00" y2="169.20" stroke="#383838" stroke-width="0.8" />
<line x1="188.30" y1="123.50" x2="188.30" y2="172.50" stroke="#303030" stroke-width="0.8" />
<line x1="227.63" y1="123.50" x2="227.63" y2="172.50" stroke="#303030" stroke-width="0.8" />
<line x1="266.96" y1="123.50" x2="266.96" y2="172.50" stroke="#303030" stroke-width="0.8" />
<line x1="306.29" y1="123.50" x2="306.29" y2="172.50" stroke="#303030" stroke-width="0.8" />
<line x1="345.62" y1="123.50" x2="345.62" y2="172.50" stroke="#303030" stroke-width="0.8" />
<line x1="384.95" y1="123.50" x2="384.95" y2="172.50" stroke="#303030" stroke-width="0.8" />
<line x1="424.28" y1="123.50" x2="424.28" y2="172.50" stroke="#303030" stroke-width="0.8" />
<text x="175.70" y="128.90" font-size="6.5" fill="#000" font-weight="normal" text-anchor="end" textLength="10.50" lengthAdjust="spacingAndGlyphs" stroke="#000" stroke-width="0.04" >0,6</text>
<text x="175.70" y="136.00" font-size="6.5" fill="#000" font-weight="normal" text-anchor="end" textLength="10.50" lengthAdjust="spacingAndGlyphs" stroke="#000" stroke-width="0.04" >0,4</text>
<text x="175.70" y="143.10" font-size="6.5" fill="#000" font-weight="normal" text-anchor="end" textLength="10.50" lengthAdjust="spacingAndGlyphs" stroke="#000" stroke-width="0.04" >0,2</text>
<text x="175.70" y="150.20" font-size="6.5" fill="#000" font-weight="normal" text-anchor="end" textLength="4.20" lengthAdjust="spacingAndGlyphs" stroke="#000" stroke-width="0.04" >0</text>
<text x="175.70" y="157.30" font-size="6.5" fill="#000" font-weight="normal" text-anchor="end" textLength="12.20" lengthAdjust="spacingAndGlyphs" stroke="#000" stroke-width="0.04" >-0,2</text>
<text x="175.70" y="164.40" font-size="6.5" fill="#000" font-weight="normal" text-anchor="end" textLength="12.20" lengthAdjust="spacingAndGlyphs" stroke="#000" stroke-width="0.04" >-0,4</text>
<text x="175.70" y="171.50" font-size="6.5" fill="#000" font-weight="normal" text-anchor="end" textLength="12.20" lengthAdjust="spacingAndGlyphs" stroke="#000" stroke-width="0.04" >-0,6</text>
<line x1="179.00" y1="126.60" x2="185.00" y2="126.60" stroke="#303030" stroke-width="0.7" />
<line x1="181.50" y1="128.02" x2="185.00" y2="128.02" stroke="#303030" stroke-width="0.7" />
<line x1="181.50" y1="129.44" x2="185.00" y2="129.44" stroke="#303030" stroke-width="0.7" />
<line x1="181.50" y1="130.86" x2="185.00" y2="130.86" stroke="#303030" stroke-width="0.7" />
<line x1="181.50" y1="132.28" x2="185.00" y2="132.28" stroke="#303030" stroke-width="0.7" />
<line x1="179.00" y1="133.70" x2="185.00" y2="133.70" stroke="#303030" stroke-width="0.7" />
<line x1="181.50" y1="135.12" x2="185.00" y2="135.12" stroke="#303030" stroke-width="0.7" />
<line x1="181.50" y1="136.54" x2="185.00" y2="136.54" stroke="#303030" stroke-width="0.7" />
<line x1="181.50" y1="137.96" x2="185.00" y2="137.96" stroke="#303030" stroke-width="0.7" />
<line x1="181.50" y1="139.38" x2="185.00" y2="139.38" stroke="#303030" stroke-width="0.7" />
<line x1="179.00" y1="140.80" x2="185.00" y2="140.80" stroke="#303030" stroke-width="0.7" />
<line x1="181.50" y1="142.22" x2="185.00" y2="142.22" stroke="#303030" stroke-width="0.7" />
<line x1="181.50" y1="143.64" x2="185.00" y2="143.64" stroke="#303030" stroke-width="0.7" />
<line x1="181.50" y1="145.06" x2="185.00" y2="145.06" stroke="#303030" stroke-width="0.7" />
<line x1="181.50" y1="146.48" x2="185.00" y2="146.48" stroke="#303030" stroke-width="0.7" />
<line x1="179.00" y1="147.90" x2="185.00" y2="147.90" stroke="#303030" stroke-width="0.7" />
<line x1="181.50" y1="149.32" x2="185.00" y2="149.32" stroke="#303030" stroke-width="0.7" />
<line x1="181.50" y1="150.74" x2="185.00" y2="150.74" stroke="#303030" stroke-width="0.7" />
<line x1="181.50" y1="152.16" x2="185.00" y2="152.16" stroke="#303030" stroke-width="0.7" />
<line x1="181.50" y1="153.58" x2="185.00" y2="153.58" stroke="#303030" stroke-width="0.7" />
<line x1="179.00" y1="155.00" x2="185.00" y2="155.00" stroke="#303030" stroke-width="0.7" />
<line x1="181.50" y1="156.42" x2="185.00" y2="156.42" stroke="#303030" stroke-width="0.7" />
<line x1="181.50" y1="157.84" x2="185.00" y2="157.84" stroke="#303030" stroke-width="0.7" />
<line x1="181.50" y1="159.26" x2="185.00" y2="159.26" stroke="#303030" stroke-width="0.7" />
<line x1="181.50" y1="160.68" x2="185.00" y2="160.68" stroke="#303030" stroke-width="0.7" />
<line x1="179.00" y1="162.10" x2="185.00" y2="162.10" stroke="#303030" stroke-width="0.7" />
<line x1="181.50" y1="163.52" x2="185.00" y2="163.52" stroke="#303030" stroke-width="0.7" />
<line x1="181.50" y1="164.94" x2="185.00" y2="164.94" stroke="#303030" stroke-width="0.7" />
<line x1="181.50" y1="166.36" x2="185.00" y2="166.36" stroke="#303030" stroke-width="0.7" />
<line x1="181.50" y1="167.78" x2="185.00" y2="167.78" stroke="#303030" stroke-width="0.7" />
<line x1="179.00" y1="169.20" x2="185.00" y2="169.20" stroke="#303030" stroke-width="0.7" />
<line x1="184.50" y1="123.50" x2="184.50" y2="172.50" stroke="#707070" stroke-width="0.8" />
<line x1="188.30" y1="174.50" x2="430.00" y2="174.50" stroke="#000" stroke-width="0.9" />
<line x1="188.30" y1="174.00" x2="188.30" y2="178.30" stroke="#000" stroke-width="0.8" />
<line x1="196.17" y1="174.00" x2="196.17" y2="176.50" stroke="#000" stroke-width="0.8" />
<line x1="204.03" y1="174.00" x2="204.03" y2="176.50" stroke="#000" stroke-width="0.8" />
<line x1="211.90" y1="174.00" x2="211.90" y2="176.50" stroke="#000" stroke-width="0.8" />
<line x1="219.76" y1="174.00" x2="219.76" y2="176.50" stroke="#000" stroke-width="0.8" />
<line x1="227.63" y1="174.00" x2="227.63" y2="178.30" stroke="#000" stroke-width="0.8" />
<line x1="235.50" y1="174.00" x2="235.50" y2="176.50" stroke="#000" stroke-width="0.8" />
<line x1="243.36" y1="174.00" x2="243.36" y2="176.50" stroke="#000" stroke-width="0.8" />
<line x1="251.23" y1="174.00" x2="251.23" y2="176.50" stroke="#000" stroke-width="0.8" />
<line x1="259.09" y1="174.00" x2="259.09" y2="176.50" stroke="#000" stroke-width="0.8" />
<line x1="266.96" y1="174.00" x2="266.96" y2="178.30" stroke="#000" stroke-width="0.8" />
<line x1="274.83" y1="174.00" x2="274.83" y2="176.50" stroke="#000" stroke-width="0.8" />
<line x1="282.69" y1="174.00" x2="282.69" y2="176.50" stroke="#000" stroke-width="0.8" />
<line x1="290.56" y1="174.00" x2="290.56" y2="176.50" stroke="#000" stroke-width="0.8" />
<line x1="298.42" y1="174.00" x2="298.42" y2="176.50" stroke="#000" stroke-width="0.8" />
<line x1="306.29" y1="174.00" x2="306.29" y2="178.30" stroke="#000" stroke-width="0.8" />
<line x1="314.16" y1="174.00" x2="314.16" y2="176.50" stroke="#000" stroke-width="0.8" />
<line x1="322.02" y1="174.00" x2="322.02" y2="176.50" stroke="#000" stroke-width="0.8" />
<line x1="329.89" y1="174.00" x2="329.89" y2="176.50" stroke="#000" stroke-width="0.8" />
<line x1="337.75" y1="174.00" x2="337.75" y2="176.50" stroke="#000" stroke-width="0.8" />
<line x1="345.62" y1="174.00" x2="345.62" y2="178.30" stroke="#000" stroke-width="0.8" />
<line x1="353.49" y1="174.00" x2="353.49" y2="176.50" stroke="#000" stroke-width="0.8" />
<line x1="361.35" y1="174.00" x2="361.35" y2="176.50" stroke="#000" stroke-width="0.8" />
<line x1="369.22" y1="174.00" x2="369.22" y2="176.50" stroke="#000" stroke-width="0.8" />
<line x1="377.08" y1="174.00" x2="377.08" y2="176.50" stroke="#000" stroke-width="0.8" />
<line x1="384.95" y1="174.00" x2="384.95" y2="178.30" stroke="#000" stroke-width="0.8" />
<line x1="392.82" y1="174.00" x2="392.82" y2="176.50" stroke="#000" stroke-width="0.8" />
<line x1="400.68" y1="174.00" x2="400.68" y2="176.50" stroke="#000" stroke-width="0.8" />
<line x1="408.55" y1="174.00" x2="408.55" y2="176.50" stroke="#000" stroke-width="0.8" />
<line x1="416.41" y1="174.00" x2="416.41" y2="176.50" stroke="#000" stroke-width="0.8" />
<line x1="424.28" y1="174.00" x2="424.28" y2="178.30" stroke="#000" stroke-width="0.8" />
<text x="188.60" y="187.00" font-size="6.4" fill="#000" font-weight="normal" text-anchor="middle" textLength="15.50" lengthAdjust="spacingAndGlyphs" stroke="#000" stroke-width="0.04" >0:30</text>
<text x="227.93" y="187.00" font-size="6.4" fill="#000" font-weight="normal" text-anchor="middle" textLength="15.50" lengthAdjust="spacingAndGlyphs" stroke="#000" stroke-width="0.04" >0:35</text>
<text x="267.26" y="187.00" font-size="6.4" fill="#000" font-weight="normal" text-anchor="middle" textLength="15.50" lengthAdjust="spacingAndGlyphs" stroke="#000" stroke-width="0.04" >0:40</text>
<text x="306.59" y="187.00" font-size="6.4" fill="#000" font-weight="normal" text-anchor="middle" textLength="15.50" lengthAdjust="spacingAndGlyphs" stroke="#000" stroke-width="0.04" >0:45</text>
<text x="345.92" y="187.00" font-size="6.4" fill="#000" font-weight="normal" text-anchor="middle" textLength="15.50" lengthAdjust="spacingAndGlyphs" stroke="#000" stroke-width="0.04" >0:50</text>
<text x="385.25" y="187.00" font-size="6.4" fill="#000" font-weight="normal" text-anchor="middle" textLength="15.50" lengthAdjust="spacingAndGlyphs" stroke="#000" stroke-width="0.04" >0:55</text>
<text x="424.58" y="187.00" font-size="6.4" fill="#000" font-weight="normal" text-anchor="middle" textLength="15.50" lengthAdjust="spacingAndGlyphs" stroke="#000" stroke-width="0.04" >1:00</text>
<polyline points="185.0,147.9 356.0,147.9" fill="none" stroke="#2828C8" stroke-width="1.05" stroke-linejoin="round"/>
<rect x="162.50" y="191.60" width="269.00" height="8.30" fill="#E8E6E1" />
<rect x="195.50" y="191.60" width="236.00" height="8.30" fill="#D4D0C8" />
<rect x="195.50" y="198.90" width="236.00" height="1.00" fill="#606060" opacity="0.8"/>
<rect x="195.50" y="191.60" width="236.00" height="1.00" fill="#F0EEEA" />
<rect x="162.50" y="191.60" width="8.50" height="8.30" fill="#D4D0C8" />
<rect x="162.50" y="191.60" width="8.50" height="1.00" fill="#FFFFFF" />
<rect x="162.50" y="191.60" width="1.00" height="8.30" fill="#FFFFFF" />
<rect x="162.50" y="198.90" width="8.50" height="1.00" fill="#404040" />
<rect x="170.00" y="191.60" width="1.00" height="8.30" fill="#404040" />
<rect x="163.50" y="197.90" width="6.50" height="1.00" fill="#808080" opacity="0.6"/>
<rect x="169.00" y="192.60" width="1.00" height="6.30" fill="#808080" opacity="0.6"/>
<polygon points="167.7,193.9 167.7,197.4 165.5,195.65" fill="#000"/>
<rect x="423.00" y="191.60" width="8.50" height="8.30" fill="#D4D0C8" />
<rect x="423.00" y="191.60" width="8.50" height="1.00" fill="#FFFFFF" />
<rect x="423.00" y="191.60" width="1.00" height="8.30" fill="#FFFFFF" />
<rect x="423.00" y="198.90" width="8.50" height="1.00" fill="#404040" />
<rect x="430.50" y="191.60" width="1.00" height="8.30" fill="#404040" />
<rect x="424.00" y="197.90" width="6.50" height="1.00" fill="#808080" opacity="0.6"/>
<rect x="429.50" y="192.60" width="1.00" height="6.30" fill="#808080" opacity="0.6"/>
<polygon points="426.5,193.9 426.5,197.4 428.7,195.65" fill="#000"/>
<rect x="157.00" y="208.70" width="280.00" height="0.90" fill="#EEECE8" />
<rect x="157.00" y="219.20" width="280.00" height="0.90" fill="#A09C94" />
<text x="159.40" y="216.80" font-size="6.4" fill="#000" font-weight="normal" text-anchor="start" textLength="92.00" lengthAdjust="spacingAndGlyphs" stroke="#000" stroke-width="0.05" >STATUS_NW_IST_POSITION_EINH</text>
<rect x="432.20" y="211.40" width="2.80" height="2.50" fill="none" stroke="#000" stroke-width="0.9"/>
<rect x="432.20" y="211.10" width="2.80" height="0.90" fill="#000" />
<rect x="430.60" y="213.20" width="2.80" height="2.60" fill="#D4D0C8" stroke="#000" stroke-width="0.9"/>
<rect x="430.60" y="212.90" width="2.80" height="0.90" fill="#000" />
<rect x="185.00" y="225.20" width="246.00" height="51.00" fill="#FFFFFF" stroke="#D0D0D0" stroke-width="0.6"/>
<line x1="185.00" y1="228.30" x2="431.00" y2="228.30" stroke="#383838" stroke-width="0.8" />
<line x1="185.00" y1="235.40" x2="431.00" y2="235.40" stroke="#383838" stroke-width="0.8" />
<line x1="185.00" y1="242.50" x2="431.00" y2="242.50" stroke="#383838" stroke-width="0.8" />
<line x1="185.00" y1="249.60" x2="431.00" y2="249.60" stroke="#383838" stroke-width="0.8" />
<line x1="185.00" y1="256.70" x2="431.00" y2="256.70" stroke="#383838" stroke-width="0.8" />
<line x1="185.00" y1="263.80" x2="431.00" y2="263.80" stroke="#383838" stroke-width="0.8" />
<line x1="185.00" y1="270.90" x2="431.00" y2="270.90" stroke="#383838" stroke-width="0.8" />
<line x1="188.30" y1="225.20" x2="188.30" y2="274.20" stroke="#303030" stroke-width="0.8" />
<line x1="227.63" y1="225.20" x2="227.63" y2="274.20" stroke="#303030" stroke-width="0.8" />
<line x1="266.96" y1="225.20" x2="266.96" y2="274.20" stroke="#303030" stroke-width="0.8" />
<line x1="306.29" y1="225.20" x2="306.29" y2="274.20" stroke="#303030" stroke-width="0.8" />
<line x1="345.62" y1="225.20" x2="345.62" y2="274.20" stroke="#303030" stroke-width="0.8" />
<line x1="384.95" y1="225.20" x2="384.95" y2="274.20" stroke="#303030" stroke-width="0.8" />
<line x1="424.28" y1="225.20" x2="424.28" y2="274.20" stroke="#303030" stroke-width="0.8" />
<text x="175.70" y="230.60" font-size="6.5" fill="#000" font-weight="normal" text-anchor="end" textLength="10.50" lengthAdjust="spacingAndGlyphs" stroke="#000" stroke-width="0.04" >0,6</text>
<text x="175.70" y="237.70" font-size="6.5" fill="#000" font-weight="normal" text-anchor="end" textLength="10.50" lengthAdjust="spacingAndGlyphs" stroke="#000" stroke-width="0.04" >0,4</text>
<text x="175.70" y="244.80" font-size="6.5" fill="#000" font-weight="normal" text-anchor="end" textLength="10.50" lengthAdjust="spacingAndGlyphs" stroke="#000" stroke-width="0.04" >0,2</text>
<text x="175.70" y="251.90" font-size="6.5" fill="#000" font-weight="normal" text-anchor="end" textLength="4.20" lengthAdjust="spacingAndGlyphs" stroke="#000" stroke-width="0.04" >0</text>
<text x="175.70" y="259.00" font-size="6.5" fill="#000" font-weight="normal" text-anchor="end" textLength="12.20" lengthAdjust="spacingAndGlyphs" stroke="#000" stroke-width="0.04" >-0,2</text>
<text x="175.70" y="266.10" font-size="6.5" fill="#000" font-weight="normal" text-anchor="end" textLength="12.20" lengthAdjust="spacingAndGlyphs" stroke="#000" stroke-width="0.04" >-0,4</text>
<text x="175.70" y="273.20" font-size="6.5" fill="#000" font-weight="normal" text-anchor="end" textLength="12.20" lengthAdjust="spacingAndGlyphs" stroke="#000" stroke-width="0.04" >-0,6</text>
<line x1="179.00" y1="228.30" x2="185.00" y2="228.30" stroke="#303030" stroke-width="0.7" />
<line x1="181.50" y1="229.72" x2="185.00" y2="229.72" stroke="#303030" stroke-width="0.7" />
<line x1="181.50" y1="231.14" x2="185.00" y2="231.14" stroke="#303030" stroke-width="0.7" />
<line x1="181.50" y1="232.56" x2="185.00" y2="232.56" stroke="#303030" stroke-width="0.7" />
<line x1="181.50" y1="233.98" x2="185.00" y2="233.98" stroke="#303030" stroke-width="0.7" />
<line x1="179.00" y1="235.40" x2="185.00" y2="235.40" stroke="#303030" stroke-width="0.7" />
<line x1="181.50" y1="236.82" x2="185.00" y2="236.82" stroke="#303030" stroke-width="0.7" />
<line x1="181.50" y1="238.24" x2="185.00" y2="238.24" stroke="#303030" stroke-width="0.7" />
<line x1="181.50" y1="239.66" x2="185.00" y2="239.66" stroke="#303030" stroke-width="0.7" />
<line x1="181.50" y1="241.08" x2="185.00" y2="241.08" stroke="#303030" stroke-width="0.7" />
<line x1="179.00" y1="242.50" x2="185.00" y2="242.50" stroke="#303030" stroke-width="0.7" />
<line x1="181.50" y1="243.92" x2="185.00" y2="243.92" stroke="#303030" stroke-width="0.7" />
<line x1="181.50" y1="245.34" x2="185.00" y2="245.34" stroke="#303030" stroke-width="0.7" />
<line x1="181.50" y1="246.76" x2="185.00" y2="246.76" stroke="#303030" stroke-width="0.7" />
<line x1="181.50" y1="248.18" x2="185.00" y2="248.18" stroke="#303030" stroke-width="0.7" />
<line x1="179.00" y1="249.60" x2="185.00" y2="249.60" stroke="#303030" stroke-width="0.7" />
<line x1="181.50" y1="251.02" x2="185.00" y2="251.02" stroke="#303030" stroke-width="0.7" />
<line x1="181.50" y1="252.44" x2="185.00" y2="252.44" stroke="#303030" stroke-width="0.7" />
<line x1="181.50" y1="253.86" x2="185.00" y2="253.86" stroke="#303030" stroke-width="0.7" />
<line x1="181.50" y1="255.28" x2="185.00" y2="255.28" stroke="#303030" stroke-width="0.7" />
<line x1="179.00" y1="256.70" x2="185.00" y2="256.70" stroke="#303030" stroke-width="0.7" />
<line x1="181.50" y1="258.12" x2="185.00" y2="258.12" stroke="#303030" stroke-width="0.7" />
<line x1="181.50" y1="259.54" x2="185.00" y2="259.54" stroke="#303030" stroke-width="0.7" />
<line x1="181.50" y1="260.96" x2="185.00" y2="260.96" stroke="#303030" stroke-width="0.7" />
<line x1="181.50" y1="262.38" x2="185.00" y2="262.38" stroke="#303030" stroke-width="0.7" />
<line x1="179.00" y1="263.80" x2="185.00" y2="263.80" stroke="#303030" stroke-width="0.7" />
<line x1="181.50" y1="265.22" x2="185.00" y2="265.22" stroke="#303030" stroke-width="0.7" />
<line x1="181.50" y1="266.64" x2="185.00" y2="266.64" stroke="#303030" stroke-width="0.7" />
<line x1="181.50" y1="268.06" x2="185.00" y2="268.06" stroke="#303030" stroke-width="0.7" />
<line x1="181.50" y1="269.48" x2="185.00" y2="269.48" stroke="#303030" stroke-width="0.7" />
<line x1="179.00" y1="270.90" x2="185.00" y2="270.90" stroke="#303030" stroke-width="0.7" />
<line x1="184.50" y1="225.20" x2="184.50" y2="274.20" stroke="#707070" stroke-width="0.8" />
<line x1="188.30" y1="276.20" x2="430.00" y2="276.20" stroke="#000" stroke-width="0.9" />
<line x1="188.30" y1="275.70" x2="188.30" y2="280.00" stroke="#000" stroke-width="0.8" />
<line x1="196.17" y1="275.70" x2="196.17" y2="278.20" stroke="#000" stroke-width="0.8" />
<line x1="204.03" y1="275.70" x2="204.03" y2="278.20" stroke="#000" stroke-width="0.8" />
<line x1="211.90" y1="275.70" x2="211.90" y2="278.20" stroke="#000" stroke-width="0.8" />
<line x1="219.76" y1="275.70" x2="219.76" y2="278.20" stroke="#000" stroke-width="0.8" />
<line x1="227.63" y1="275.70" x2="227.63" y2="280.00" stroke="#000" stroke-width="0.8" />
<line x1="235.50" y1="275.70" x2="235.50" y2="278.20" stroke="#000" stroke-width="0.8" />
<line x1="243.36" y1="275.70" x2="243.36" y2="278.20" stroke="#000" stroke-width="0.8" />
<line x1="251.23" y1="275.70" x2="251.23" y2="278.20" stroke="#000" stroke-width="0.8" />
<line x1="259.09" y1="275.70" x2="259.09" y2="278.20" stroke="#000" stroke-width="0.8" />
<line x1="266.96" y1="275.70" x2="266.96" y2="280.00" stroke="#000" stroke-width="0.8" />
<line x1="274.83" y1="275.70" x2="274.83" y2="278.20" stroke="#000" stroke-width="0.8" />
<line x1="282.69" y1="275.70" x2="282.69" y2="278.20" stroke="#000" stroke-width="0.8" />
<line x1="290.56" y1="275.70" x2="290.56" y2="278.20" stroke="#000" stroke-width="0.8" />
<line x1="298.42" y1="275.70" x2="298.42" y2="278.20" stroke="#000" stroke-width="0.8" />
<line x1="306.29" y1="275.70" x2="306.29" y2="280.00" stroke="#000" stroke-width="0.8" />
<line x1="314.16" y1="275.70" x2="314.16" y2="278.20" stroke="#000" stroke-width="0.8" />
<line x1="322.02" y1="275.70" x2="322.02" y2="278.20" stroke="#000" stroke-width="0.8" />
<line x1="329.89" y1="275.70" x2="329.89" y2="278.20" stroke="#000" stroke-width="0.8" />
<line x1="337.75" y1="275.70" x2="337.75" y2="278.20" stroke="#000" stroke-width="0.8" />
<line x1="345.62" y1="275.70" x2="345.62" y2="280.00" stroke="#000" stroke-width="0.8" />
<line x1="353.49" y1="275.70" x2="353.49" y2="278.20" stroke="#000" stroke-width="0.8" />
<line x1="361.35" y1="275.70" x2="361.35" y2="278.20" stroke="#000" stroke-width="0.8" />
<line x1="369.22" y1="275.70" x2="369.22" y2="278.20" stroke="#000" stroke-width="0.8" />
<line x1="377.08" y1="275.70" x2="377.08" y2="278.20" stroke="#000" stroke-width="0.8" />
<line x1="384.95" y1="275.70" x2="384.95" y2="280.00" stroke="#000" stroke-width="0.8" />
<line x1="392.82" y1="275.70" x2="392.82" y2="278.20" stroke="#000" stroke-width="0.8" />
<line x1="400.68" y1="275.70" x2="400.68" y2="278.20" stroke="#000" stroke-width="0.8" />
<line x1="408.55" y1="275.70" x2="408.55" y2="278.20" stroke="#000" stroke-width="0.8" />
<line x1="416.41" y1="275.70" x2="416.41" y2="278.20" stroke="#000" stroke-width="0.8" />
<line x1="424.28" y1="275.70" x2="424.28" y2="280.00" stroke="#000" stroke-width="0.8" />
<text x="188.60" y="288.70" font-size="6.4" fill="#000" font-weight="normal" text-anchor="middle" textLength="15.50" lengthAdjust="spacingAndGlyphs" stroke="#000" stroke-width="0.04" >0:30</text>
<text x="227.93" y="288.70" font-size="6.4" fill="#000" font-weight="normal" text-anchor="middle" textLength="15.50" lengthAdjust="spacingAndGlyphs" stroke="#000" stroke-width="0.04" >0:35</text>
<text x="267.26" y="288.70" font-size="6.4" fill="#000" font-weight="normal" text-anchor="middle" textLength="15.50" lengthAdjust="spacingAndGlyphs" stroke="#000" stroke-width="0.04" >0:40</text>
<text x="306.59" y="288.70" font-size="6.4" fill="#000" font-weight="normal" text-anchor="middle" textLength="15.50" lengthAdjust="spacingAndGlyphs" stroke="#000" stroke-width="0.04" >0:45</text>
<text x="345.92" y="288.70" font-size="6.4" fill="#000" font-weight="normal" text-anchor="middle" textLength="15.50" lengthAdjust="spacingAndGlyphs" stroke="#000" stroke-width="0.04" >0:50</text>
<text x="385.25" y="288.70" font-size="6.4" fill="#000" font-weight="normal" text-anchor="middle" textLength="15.50" lengthAdjust="spacingAndGlyphs" stroke="#000" stroke-width="0.04" >0:55</text>
<text x="424.58" y="288.70" font-size="6.4" fill="#000" font-weight="normal" text-anchor="middle" textLength="15.50" lengthAdjust="spacingAndGlyphs" stroke="#000" stroke-width="0.04" >1:00</text>
<polyline points="185.0,249.6 347.0,249.6" fill="none" stroke="#2828C8" stroke-width="1.05" stroke-linejoin="round"/>
<rect x="162.50" y="293.30" width="269.00" height="8.30" fill="#E8E6E1" />
<rect x="195.50" y="293.30" width="236.00" height="8.30" fill="#D4D0C8" />
<rect x="195.50" y="300.60" width="236.00" height="1.00" fill="#606060" opacity="0.8"/>
<rect x="195.50" y="293.30" width="236.00" height="1.00" fill="#F0EEEA" />
<rect x="162.50" y="293.30" width="8.50" height="8.30" fill="#D4D0C8" />
<rect x="162.50" y="293.30" width="8.50" height="1.00" fill="#FFFFFF" />
<rect x="162.50" y="293.30" width="1.00" height="8.30" fill="#FFFFFF" />
<rect x="162.50" y="300.60" width="8.50" height="1.00" fill="#404040" />
<rect x="170.00" y="293.30" width="1.00" height="8.30" fill="#404040" />
<rect x="163.50" y="299.60" width="6.50" height="1.00" fill="#808080" opacity="0.6"/>
<rect x="169.00" y="294.30" width="1.00" height="6.30" fill="#808080" opacity="0.6"/>
<polygon points="167.7,295.6 167.7,299.1 165.5,297.35" fill="#000"/>
<rect x="423.00" y="293.30" width="8.50" height="8.30" fill="#D4D0C8" />
<rect x="423.00" y="293.30" width="8.50" height="1.00" fill="#FFFFFF" />
<rect x="423.00" y="293.30" width="1.00" height="8.30" fill="#FFFFFF" />
<rect x="423.00" y="300.60" width="8.50" height="1.00" fill="#404040" />
<rect x="430.50" y="293.30" width="1.00" height="8.30" fill="#404040" />
<rect x="424.00" y="299.60" width="6.50" height="1.00" fill="#808080" opacity="0.6"/>
<rect x="429.50" y="294.30" width="1.00" height="6.30" fill="#808080" opacity="0.6"/>
<polygon points="426.5,295.6 426.5,299.1 428.7,297.35" fill="#000"/>
<rect x="157.00" y="310.40" width="280.00" height="0.90" fill="#EEECE8" />
<rect x="157.00" y="320.90" width="280.00" height="0.90" fill="#A09C94" />
<text x="159.40" y="318.50" font-size="6.4" fill="#000" font-weight="normal" text-anchor="start" textLength="94.00" lengthAdjust="spacingAndGlyphs" stroke="#000" stroke-width="0.05" >STATUS_NW_IST_POSITION_WERT</text>
<rect x="432.20" y="313.10" width="2.80" height="2.50" fill="none" stroke="#000" stroke-width="0.9"/>
<rect x="432.20" y="312.80" width="2.80" height="0.90" fill="#000" />
<rect x="430.60" y="314.90" width="2.80" height="2.60" fill="#D4D0C8" stroke="#000" stroke-width="0.9"/>
<rect x="430.60" y="314.60" width="2.80" height="0.90" fill="#000" />
<rect x="179.50" y="326.50" width="251.50" height="50.50" fill="#FFFFFF" stroke="#D0D0D0" stroke-width="0.6"/>
<line x1="179.50" y1="329.40" x2="431.00" y2="329.40" stroke="#383838" stroke-width="0.8" />
<line x1="179.50" y1="334.72" x2="431.00" y2="334.72" stroke="#383838" stroke-width="0.8" />
<line x1="179.50" y1="340.05" x2="431.00" y2="340.05" stroke="#383838" stroke-width="0.8" />
<line x1="179.50" y1="345.38" x2="431.00" y2="345.38" stroke="#383838" stroke-width="0.8" />
<line x1="179.50" y1="350.70" x2="431.00" y2="350.70" stroke="#383838" stroke-width="0.8" />
<line x1="179.50" y1="356.02" x2="431.00" y2="356.02" stroke="#383838" stroke-width="0.8" />
<line x1="179.50" y1="361.35" x2="431.00" y2="361.35" stroke="#383838" stroke-width="0.8" />
<line x1="179.50" y1="366.68" x2="431.00" y2="366.68" stroke="#383838" stroke-width="0.8" />
<line x1="179.50" y1="372.00" x2="431.00" y2="372.00" stroke="#383838" stroke-width="0.8" />
<line x1="183.50" y1="326.50" x2="183.50" y2="375.00" stroke="#303030" stroke-width="0.8" />
<line x1="223.63" y1="326.50" x2="223.63" y2="375.00" stroke="#303030" stroke-width="0.8" />
<line x1="263.76" y1="326.50" x2="263.76" y2="375.00" stroke="#303030" stroke-width="0.8" />
<line x1="303.89" y1="326.50" x2="303.89" y2="375.00" stroke="#303030" stroke-width="0.8" />
<line x1="344.02" y1="326.50" x2="344.02" y2="375.00" stroke="#303030" stroke-width="0.8" />
<line x1="384.15" y1="326.50" x2="384.15" y2="375.00" stroke="#303030" stroke-width="0.8" />
<line x1="424.28" y1="326.50" x2="424.28" y2="375.00" stroke="#303030" stroke-width="0.8" />
<line x1="183.50" y1="377.00" x2="430.00" y2="377.00" stroke="#000" stroke-width="0.9" />
<line x1="183.50" y1="376.50" x2="183.50" y2="380.80" stroke="#000" stroke-width="0.8" />
<line x1="191.53" y1="376.50" x2="191.53" y2="379.00" stroke="#000" stroke-width="0.8" />
<line x1="199.55" y1="376.50" x2="199.55" y2="379.00" stroke="#000" stroke-width="0.8" />
<line x1="207.58" y1="376.50" x2="207.58" y2="379.00" stroke="#000" stroke-width="0.8" />
<line x1="215.60" y1="376.50" x2="215.60" y2="379.00" stroke="#000" stroke-width="0.8" />
<line x1="223.63" y1="376.50" x2="223.63" y2="380.80" stroke="#000" stroke-width="0.8" />
<line x1="231.66" y1="376.50" x2="231.66" y2="379.00" stroke="#000" stroke-width="0.8" />
<line x1="239.68" y1="376.50" x2="239.68" y2="379.00" stroke="#000" stroke-width="0.8" />
<line x1="247.71" y1="376.50" x2="247.71" y2="379.00" stroke="#000" stroke-width="0.8" />
<line x1="255.73" y1="376.50" x2="255.73" y2="379.00" stroke="#000" stroke-width="0.8" />
<line x1="263.76" y1="376.50" x2="263.76" y2="380.80" stroke="#000" stroke-width="0.8" />
<line x1="271.79" y1="376.50" x2="271.79" y2="379.00" stroke="#000" stroke-width="0.8" />
<line x1="279.81" y1="376.50" x2="279.81" y2="379.00" stroke="#000" stroke-width="0.8" />
<line x1="287.84" y1="376.50" x2="287.84" y2="379.00" stroke="#000" stroke-width="0.8" />
<line x1="295.86" y1="376.50" x2="295.86" y2="379.00" stroke="#000" stroke-width="0.8" />
<line x1="303.89" y1="376.50" x2="303.89" y2="380.80" stroke="#000" stroke-width="0.8" />
<line x1="311.92" y1="376.50" x2="311.92" y2="379.00" stroke="#000" stroke-width="0.8" />
<line x1="319.94" y1="376.50" x2="319.94" y2="379.00" stroke="#000" stroke-width="0.8" />
<line x1="327.97" y1="376.50" x2="327.97" y2="379.00" stroke="#000" stroke-width="0.8" />
<line x1="335.99" y1="376.50" x2="335.99" y2="379.00" stroke="#000" stroke-width="0.8" />
<line x1="344.02" y1="376.50" x2="344.02" y2="380.80" stroke="#000" stroke-width="0.8" />
<line x1="352.05" y1="376.50" x2="352.05" y2="379.00" stroke="#000" stroke-width="0.8" />
<line x1="360.07" y1="376.50" x2="360.07" y2="379.00" stroke="#000" stroke-width="0.8" />
<line x1="368.10" y1="376.50" x2="368.10" y2="379.00" stroke="#000" stroke-width="0.8" />
<line x1="376.12" y1="376.50" x2="376.12" y2="379.00" stroke="#000" stroke-width="0.8" />
<line x1="384.15" y1="376.50" x2="384.15" y2="380.80" stroke="#000" stroke-width="0.8" />
<line x1="392.18" y1="376.50" x2="392.18" y2="379.00" stroke="#000" stroke-width="0.8" />
<line x1="400.20" y1="376.50" x2="400.20" y2="379.00" stroke="#000" stroke-width="0.8" />
<line x1="408.23" y1="376.50" x2="408.23" y2="379.00" stroke="#000" stroke-width="0.8" />
<line x1="416.25" y1="376.50" x2="416.25" y2="379.00" stroke="#000" stroke-width="0.8" />
<line x1="424.28" y1="376.50" x2="424.28" y2="380.80" stroke="#000" stroke-width="0.8" />
<text x="183.80" y="389.70" font-size="6.4" fill="#000" font-weight="normal" text-anchor="middle" textLength="15.50" lengthAdjust="spacingAndGlyphs" stroke="#000" stroke-width="0.04" >0:30</text>
<text x="223.93" y="389.70" font-size="6.4" fill="#000" font-weight="normal" text-anchor="middle" textLength="15.50" lengthAdjust="spacingAndGlyphs" stroke="#000" stroke-width="0.04" >0:35</text>
<text x="264.06" y="389.70" font-size="6.4" fill="#000" font-weight="normal" text-anchor="middle" textLength="15.50" lengthAdjust="spacingAndGlyphs" stroke="#000" stroke-width="0.04" >0:40</text>
<text x="304.19" y="389.70" font-size="6.4" fill="#000" font-weight="normal" text-anchor="middle" textLength="15.50" lengthAdjust="spacingAndGlyphs" stroke="#000" stroke-width="0.04" >0:45</text>
<text x="344.32" y="389.70" font-size="6.4" fill="#000" font-weight="normal" text-anchor="middle" textLength="15.50" lengthAdjust="spacingAndGlyphs" stroke="#000" stroke-width="0.04" >0:50</text>
<text x="384.45" y="389.70" font-size="6.4" fill="#000" font-weight="normal" text-anchor="middle" textLength="15.50" lengthAdjust="spacingAndGlyphs" stroke="#000" stroke-width="0.04" >0:55</text>
<text x="424.58" y="389.70" font-size="6.4" fill="#000" font-weight="normal" text-anchor="middle" textLength="15.50" lengthAdjust="spacingAndGlyphs" stroke="#000" stroke-width="0.04" >1:00</text>
<polyline points="180.0,331.0 182.2,371.2 185.6,366.9 188.8,370.6 191.2,366.9 193.8,370.0 196.2,370.6 200.0,330.6 203.1,370.6 205.6,366.9 208.1,370.6 211.2,366.9 214.4,366.9 217.5,330.6 220.0,330.6 223.1,356.2 226.2,357.5 228.8,361.2 231.9,366.9 234.4,343.8 237.5,370.6 240.0,366.9 243.1,368.8 246.2,370.6 250.0,358.1 251.9,357.5 255.0,370.6 258.1,369.4 260.6,337.5 263.5,328.8 266.2,370.6 269.4,366.9 271.9,368.8 275.0,360.0 277.5,368.8 280.6,366.9 283.8,366.2 286.9,356.9 289.4,365.6 291.9,360.0 295.0,367.5 298.1,365.6 300.6,370.0 303.1,368.1 306.9,330.0 309.4,366.9 312.5,366.9 315.0,370.6 318.1,366.9 320.6,370.6 323.8,366.9 326.9,370.6 330.0,366.9 332.5,370.0 335.6,370.6 338.8,330.0 341.9,370.6" fill="none" stroke="#1C1CDC" stroke-width="1.7" stroke-linejoin="round"/>
<rect x="162.50" y="394.40" width="269.00" height="8.30" fill="#E8E6E1" />
<rect x="195.60" y="394.40" width="235.90" height="8.30" fill="#D4D0C8" />
<rect x="195.60" y="401.70" width="235.90" height="1.00" fill="#606060" opacity="0.8"/>
<rect x="195.60" y="394.40" width="235.90" height="1.00" fill="#F0EEEA" />
<rect x="162.50" y="394.40" width="8.50" height="8.30" fill="#D4D0C8" />
<rect x="162.50" y="394.40" width="8.50" height="1.00" fill="#FFFFFF" />
<rect x="162.50" y="394.40" width="1.00" height="8.30" fill="#FFFFFF" />
<rect x="162.50" y="401.70" width="8.50" height="1.00" fill="#404040" />
<rect x="170.00" y="394.40" width="1.00" height="8.30" fill="#404040" />
<rect x="163.50" y="400.70" width="6.50" height="1.00" fill="#808080" opacity="0.6"/>
<rect x="169.00" y="395.40" width="1.00" height="6.30" fill="#808080" opacity="0.6"/>
<polygon points="167.7,396.7 167.7,400.2 165.5,398.45" fill="#000"/>
<rect x="423.00" y="394.40" width="8.50" height="8.30" fill="#D4D0C8" />
<rect x="423.00" y="394.40" width="8.50" height="1.00" fill="#FFFFFF" />
<rect x="423.00" y="394.40" width="1.00" height="8.30" fill="#FFFFFF" />
<rect x="423.00" y="401.70" width="8.50" height="1.00" fill="#404040" />
<rect x="430.50" y="394.40" width="1.00" height="8.30" fill="#404040" />
<rect x="424.00" y="400.70" width="6.50" height="1.00" fill="#808080" opacity="0.6"/>
<rect x="429.50" y="395.40" width="1.00" height="6.30" fill="#808080" opacity="0.6"/>
<polygon points="426.5,396.7 426.5,400.2 428.7,398.45" fill="#000"/>
<text x="170.30" y="331.40" font-size="5.6" fill="#000" font-weight="normal" text-anchor="end" textLength="6.60" lengthAdjust="spacingAndGlyphs" stroke="#000" stroke-width="0.15" >16</text>
<text x="170.30" y="336.72" font-size="5.6" fill="#000" font-weight="normal" text-anchor="end" textLength="6.60" lengthAdjust="spacingAndGlyphs" stroke="#000" stroke-width="0.15" >14</text>
<text x="170.30" y="342.05" font-size="5.6" fill="#000" font-weight="normal" text-anchor="end" textLength="6.60" lengthAdjust="spacingAndGlyphs" stroke="#000" stroke-width="0.15" >12</text>
<text x="170.30" y="347.38" font-size="5.6" fill="#000" font-weight="normal" text-anchor="end" textLength="6.60" lengthAdjust="spacingAndGlyphs" stroke="#000" stroke-width="0.15" >10</text>
<text x="0" y="0" font-size="5.6" text-anchor="middle" stroke="#000" stroke-width="0.15" transform="translate(170.2,350.70) rotate(-90)">8</text>
<text x="0" y="0" font-size="5.6" text-anchor="middle" stroke="#000" stroke-width="0.15" transform="translate(170.2,356.02) rotate(-90)">6</text>
<text x="0" y="0" font-size="5.6" text-anchor="middle" stroke="#000" stroke-width="0.15" transform="translate(170.2,361.35) rotate(-90)">4</text>
<text x="0" y="0" font-size="5.6" text-anchor="middle" stroke="#000" stroke-width="0.15" transform="translate(170.2,366.68) rotate(-90)">2</text>
<text x="0" y="0" font-size="5.6" text-anchor="middle" stroke="#000" stroke-width="0.15" transform="translate(170.2,372.00) rotate(-90)">0</text>
<line x1="173.50" y1="329.40" x2="179.00" y2="329.40" stroke="#202020" stroke-width="0.7" />
<line x1="175.50" y1="330.46" x2="179.00" y2="330.46" stroke="#202020" stroke-width="0.7" />
<line x1="175.50" y1="331.53" x2="179.00" y2="331.53" stroke="#202020" stroke-width="0.7" />
<line x1="175.50" y1="332.59" x2="179.00" y2="332.59" stroke="#202020" stroke-width="0.7" />
<line x1="175.50" y1="333.66" x2="179.00" y2="333.66" stroke="#202020" stroke-width="0.7" />
<line x1="173.50" y1="334.72" x2="179.00" y2="334.72" stroke="#202020" stroke-width="0.7" />
<line x1="175.50" y1="335.79" x2="179.00" y2="335.79" stroke="#202020" stroke-width="0.7" />
<line x1="175.50" y1="336.85" x2="179.00" y2="336.85" stroke="#202020" stroke-width="0.7" />
<line x1="175.50" y1="337.92" x2="179.00" y2="337.92" stroke="#202020" stroke-width="0.7" />
<line x1="175.50" y1="338.98" x2="179.00" y2="338.98" stroke="#202020" stroke-width="0.7" />
<line x1="173.50" y1="340.05" x2="179.00" y2="340.05" stroke="#202020" stroke-width="0.7" />
<line x1="175.50" y1="341.12" x2="179.00" y2="341.12" stroke="#202020" stroke-width="0.7" />
<line x1="175.50" y1="342.18" x2="179.00" y2="342.18" stroke="#202020" stroke-width="0.7" />
<line x1="175.50" y1="343.25" x2="179.00" y2="343.25" stroke="#202020" stroke-width="0.7" />
<line x1="175.50" y1="344.31" x2="179.00" y2="344.31" stroke="#202020" stroke-width="0.7" />
<line x1="173.50" y1="345.38" x2="179.00" y2="345.38" stroke="#202020" stroke-width="0.7" />
<line x1="175.50" y1="346.44" x2="179.00" y2="346.44" stroke="#202020" stroke-width="0.7" />
<line x1="175.50" y1="347.50" x2="179.00" y2="347.50" stroke="#202020" stroke-width="0.7" />
<line x1="175.50" y1="348.57" x2="179.00" y2="348.57" stroke="#202020" stroke-width="0.7" />
<line x1="175.50" y1="349.63" x2="179.00" y2="349.63" stroke="#202020" stroke-width="0.7" />
<line x1="173.50" y1="350.70" x2="179.00" y2="350.70" stroke="#202020" stroke-width="0.7" />
<line x1="175.50" y1="351.76" x2="179.00" y2="351.76" stroke="#202020" stroke-width="0.7" />
<line x1="175.50" y1="352.83" x2="179.00" y2="352.83" stroke="#202020" stroke-width="0.7" />
<line x1="175.50" y1="353.89" x2="179.00" y2="353.89" stroke="#202020" stroke-width="0.7" />
<line x1="175.50" y1="354.96" x2="179.00" y2="354.96" stroke="#202020" stroke-width="0.7" />
<line x1="173.50" y1="356.02" x2="179.00" y2="356.02" stroke="#202020" stroke-width="0.7" />
<line x1="175.50" y1="357.09" x2="179.00" y2="357.09" stroke="#202020" stroke-width="0.7" />
<line x1="175.50" y1="358.15" x2="179.00" y2="358.15" stroke="#202020" stroke-width="0.7" />
<line x1="175.50" y1="359.22" x2="179.00" y2="359.22" stroke="#202020" stroke-width="0.7" />
<line x1="175.50" y1="360.28" x2="179.00" y2="360.28" stroke="#202020" stroke-width="0.7" />
<line x1="173.50" y1="361.35" x2="179.00" y2="361.35" stroke="#202020" stroke-width="0.7" />
<line x1="175.50" y1="362.42" x2="179.00" y2="362.42" stroke="#202020" stroke-width="0.7" />
<line x1="175.50" y1="363.48" x2="179.00" y2="363.48" stroke="#202020" stroke-width="0.7" />
<line x1="175.50" y1="364.55" x2="179.00" y2="364.55" stroke="#202020" stroke-width="0.7" />
<line x1="175.50" y1="365.61" x2="179.00" y2="365.61" stroke="#202020" stroke-width="0.7" />
<line x1="173.50" y1="366.68" x2="179.00" y2="366.68" stroke="#202020" stroke-width="0.7" />
<line x1="175.50" y1="367.74" x2="179.00" y2="367.74" stroke="#202020" stroke-width="0.7" />
<line x1="175.50" y1="368.81" x2="179.00" y2="368.81" stroke="#202020" stroke-width="0.7" />
<line x1="175.50" y1="369.87" x2="179.00" y2="369.87" stroke="#202020" stroke-width="0.7" />
<line x1="175.50" y1="370.94" x2="179.00" y2="370.94" stroke="#202020" stroke-width="0.7" />
<line x1="173.50" y1="372.00" x2="179.00" y2="372.00" stroke="#202020" stroke-width="0.7" />
<line x1="179.00" y1="326.50" x2="179.00" y2="375.00" stroke="#606060" stroke-width="0.8" />
</svg>
</body></html>
